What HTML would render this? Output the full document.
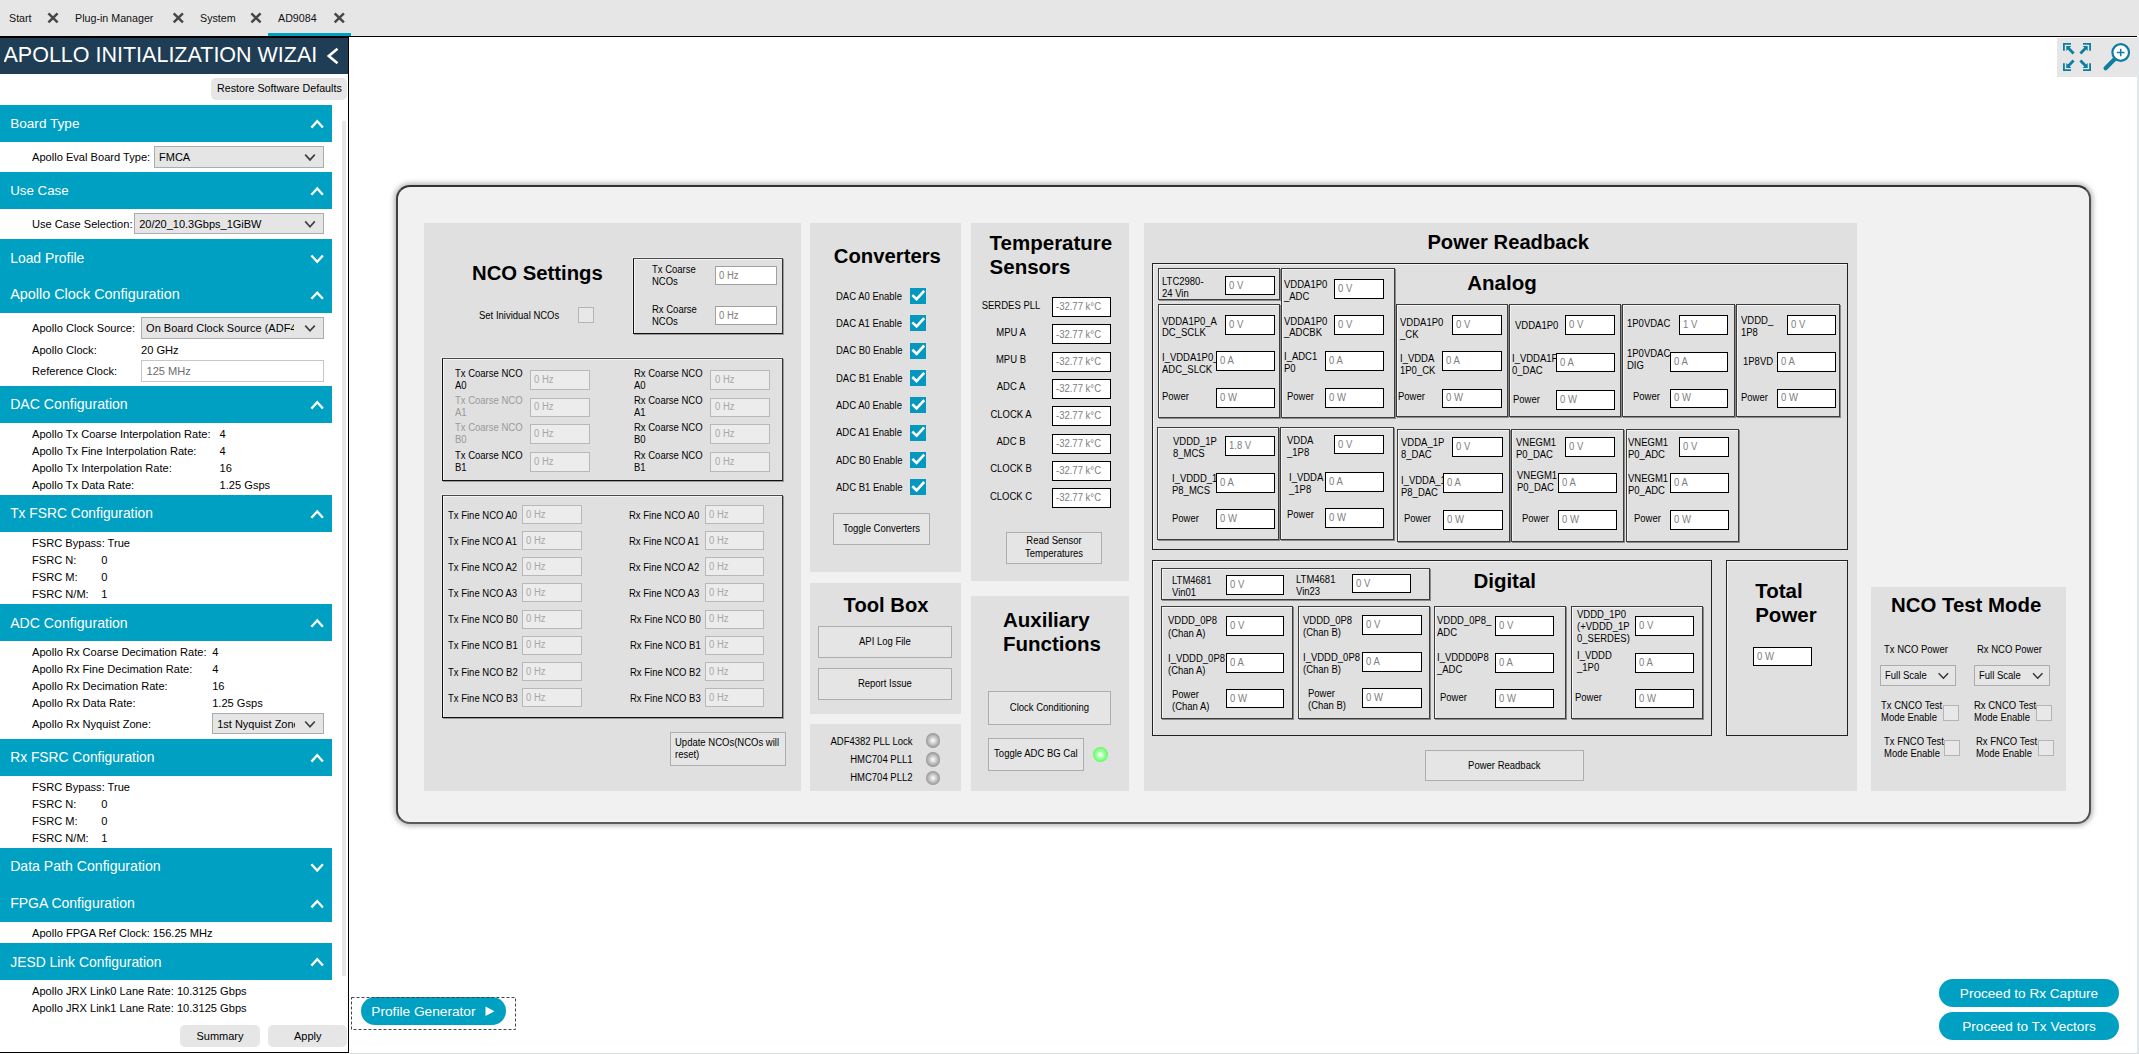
<!DOCTYPE html>
<html><head><meta charset="utf-8"><style>
html,body{margin:0;padding:0;width:2139px;height:1054px;overflow:hidden;background:#fff;position:relative}
body>div{position:absolute}
.t{font-family:"Liberation Sans", sans-serif;white-space:pre;color:#000}
svg{position:absolute;left:0;top:0}
</style></head><body>
<div style="left:0.0px;top:0.0px;width:2139.0px;height:36.0px;background:#e6e6e6"></div>
<div class="t" style="left:9.0px;top:12.15px;font-size:10.7px;line-height:13.91px;color:#111;">Start</div>
<div class="t" style="left:75.0px;top:12.15px;font-size:10.7px;line-height:13.91px;color:#111;">Plug-in Manager</div>
<div class="t" style="left:200.0px;top:12.15px;font-size:10.7px;line-height:13.91px;color:#111;">System</div>
<div class="t" style="left:278.0px;top:12.15px;font-size:10.7px;line-height:13.91px;color:#111;">AD9084</div>
<div style="left:268.0px;top:33.0px;width:83.0px;height:3.0px;background:#00a0c2"></div>
<div style="left:0.0px;top:36.0px;width:2137.0px;height:1.0px;background:#000"></div>
<div style="left:2137.0px;top:37.0px;width:2.0px;height:1017.0px;background:#e2e7e9"></div>
<div style="left:349.0px;top:1053.0px;width:1790.0px;height:1.0px;background:#d6dbde"></div>
<div style="left:2057.0px;top:37.5px;width:80.0px;height:39.5px;background:#e6e6e6"></div>
<div style="left:0.0px;top:37.0px;width:348.0px;height:1015.5px;background:#fff"></div>
<div style="left:0.0px;top:36.0px;width:349.0px;height:1.6px;background:#000"></div>
<div style="left:348.0px;top:37.0px;width:1.0px;height:1016.0px;background:#000"></div>
<div style="left:0.0px;top:1052.0px;width:349.0px;height:1.0px;background:#000"></div>
<div style="left:0.0px;top:37.6px;width:348.0px;height:36.4px;background:#1f3d54"></div>
<div class="t" style="left:3.5px;top:42.75px;font-size:21.5px;line-height:25.80px;color:#fff;width:320px;overflow:hidden">APOLLO INITIALIZATION WIZAI</div>
<div style="left:211.2px;top:78.2px;width:135.8px;height:22.2px;background:#e6e6e6;border-radius:5px"></div>
<div class="t" style="left:217.0px;top:82.34px;font-size:10.7px;line-height:13.91px;color:#000;">Restore Software Defaults</div>
<div style="left:341.6px;top:121.0px;width:4.0px;height:854.7px;background:#e6e6e6"></div>
<div style="left:0.0px;top:105.0px;width:332.0px;height:36.5px;background:#00a0c2"></div>
<div class="t" style="left:10.2px;top:114.71px;font-size:13.6px;line-height:17.68px;color:#fff;">Board Type</div>
<div style="left:0.0px;top:172.0px;width:332.0px;height:37.0px;background:#00a0c2"></div>
<div class="t" style="left:10.2px;top:182.16px;font-size:13.3px;line-height:17.29px;color:#fff;">Use Case</div>
<div style="left:0.0px;top:239.0px;width:332.0px;height:37.0px;background:#00a0c2"></div>
<div class="t" style="left:10.2px;top:248.77px;font-size:13.9px;line-height:18.07px;color:#fff;">Load Profile</div>
<div style="left:0.0px;top:276.0px;width:332.0px;height:37.0px;background:#00a0c2"></div>
<div class="t" style="left:10.2px;top:285.44px;font-size:14.4px;line-height:18.72px;color:#fff;">Apollo Clock Configuration</div>
<div style="left:0.0px;top:386.0px;width:332.0px;height:36.5px;background:#00a0c2"></div>
<div class="t" style="left:10.2px;top:395.38px;font-size:14.1px;line-height:18.33px;color:#fff;">DAC Configuration</div>
<div style="left:0.0px;top:495.0px;width:332.0px;height:36.8px;background:#00a0c2"></div>
<div class="t" style="left:10.2px;top:504.73px;font-size:13.8px;line-height:17.94px;color:#fff;">Tx FSRC Configuration</div>
<div style="left:0.0px;top:604.0px;width:332.0px;height:36.8px;background:#00a0c2"></div>
<div class="t" style="left:10.2px;top:613.53px;font-size:14.1px;line-height:18.33px;color:#fff;">ADC Configuration</div>
<div style="left:0.0px;top:739.0px;width:332.0px;height:36.5px;background:#00a0c2"></div>
<div class="t" style="left:10.2px;top:748.58px;font-size:13.8px;line-height:17.94px;color:#fff;">Rx FSRC Configuration</div>
<div style="left:0.0px;top:848.0px;width:332.0px;height:36.5px;background:#00a0c2"></div>
<div class="t" style="left:10.2px;top:857.38px;font-size:14.1px;line-height:18.33px;color:#fff;">Data Path Configuration</div>
<div style="left:0.0px;top:884.5px;width:332.0px;height:37.0px;background:#00a0c2"></div>
<div class="t" style="left:10.2px;top:894.20px;font-size:14.0px;line-height:18.2px;color:#fff;">FPGA Configuration</div>
<div style="left:0.0px;top:943.0px;width:332.0px;height:36.5px;background:#00a0c2"></div>
<div class="t" style="left:10.2px;top:952.51px;font-size:13.9px;line-height:18.07px;color:#fff;">JESD Link Configuration</div>
<div class="t" style="left:32.0px;top:149.78px;font-size:11.1px;line-height:14.43px;color:#000;">Apollo Eval Board Type:</div>
<div style="left:154.0px;top:146.0px;width:170.0px;height:22.0px;background:#e5e5e5;border:1px solid #acacac;box-sizing:border-box"></div>
<div class="t" style="left:159.0px;top:149.95px;font-size:11.0px;line-height:14.30px;width:145.5px;overflow:hidden;color:#000">FMCA</div>
<div class="t" style="left:32.0px;top:216.78px;font-size:11.1px;line-height:14.43px;color:#000;">Use Case Selection:</div>
<div style="left:134.0px;top:213.0px;width:190.0px;height:21.0px;background:#e5e5e5;border:1px solid #acacac;box-sizing:border-box"></div>
<div class="t" style="left:139.2px;top:216.75px;font-size:11.0px;line-height:14.30px;width:165.3px;overflow:hidden;color:#000">20/20_10.3Gbps_1GiBW</div>
<div class="t" style="left:32.0px;top:320.79px;font-size:11.1px;line-height:14.43px;color:#000;">Apollo Clock Source:</div>
<div style="left:141.0px;top:317.0px;width:183.0px;height:22.0px;background:#e5e5e5;border:1px solid #acacac;box-sizing:border-box"></div>
<div class="t" style="left:146.1px;top:320.85px;font-size:11.0px;line-height:14.30px;width:147.9px;overflow:hidden;color:#000">On Board Clock Source (ADF4382)</div>
<div class="t" style="left:32.0px;top:342.59px;font-size:11.1px;line-height:14.43px;color:#000;">Apollo Clock:</div>
<div class="t" style="left:141.0px;top:342.59px;font-size:11.1px;line-height:14.43px;color:#000;">20 GHz</div>
<div class="t" style="left:32.0px;top:363.59px;font-size:11.1px;line-height:14.43px;color:#000;">Reference Clock:</div>
<div style="left:141.0px;top:360.0px;width:183.0px;height:22.0px;background:#fff;border:1px solid #c6c6c6;box-sizing:border-box"></div>
<div class="t" style="left:146.5px;top:363.79px;font-size:11.1px;line-height:14.43px;color:#6d6d6d;">125 MHz</div>
<div class="t" style="left:32.0px;top:426.99px;font-size:11.1px;line-height:14.43px;color:#000;">Apollo Tx Coarse Interpolation Rate:</div>
<div class="t" style="left:219.6px;top:426.99px;font-size:11.1px;line-height:14.43px;color:#000;">4</div>
<div class="t" style="left:32.0px;top:443.79px;font-size:11.1px;line-height:14.43px;color:#000;">Apollo Tx Fine Interpolation Rate:</div>
<div class="t" style="left:219.6px;top:443.79px;font-size:11.1px;line-height:14.43px;color:#000;">4</div>
<div class="t" style="left:32.0px;top:460.99px;font-size:11.1px;line-height:14.43px;color:#000;">Apollo Tx Interpolation Rate:</div>
<div class="t" style="left:219.6px;top:460.99px;font-size:11.1px;line-height:14.43px;color:#000;">16</div>
<div class="t" style="left:32.0px;top:477.79px;font-size:11.1px;line-height:14.43px;color:#000;">Apollo Tx Data Rate:</div>
<div class="t" style="left:219.6px;top:477.79px;font-size:11.1px;line-height:14.43px;color:#000;">1.25 Gsps</div>
<div class="t" style="left:32.0px;top:535.78px;font-size:11.1px;line-height:14.43px;color:#000;">FSRC Bypass: True</div>
<div class="t" style="left:32.0px;top:552.78px;font-size:11.1px;line-height:14.43px;color:#000;">FSRC N:</div>
<div class="t" style="left:101.2px;top:552.78px;font-size:11.1px;line-height:14.43px;color:#000;">0</div>
<div class="t" style="left:32.0px;top:569.78px;font-size:11.1px;line-height:14.43px;color:#000;">FSRC M:</div>
<div class="t" style="left:101.2px;top:569.78px;font-size:11.1px;line-height:14.43px;color:#000;">0</div>
<div class="t" style="left:32.0px;top:586.78px;font-size:11.1px;line-height:14.43px;color:#000;">FSRC N/M:</div>
<div class="t" style="left:101.2px;top:586.78px;font-size:11.1px;line-height:14.43px;color:#000;">1</div>
<div class="t" style="left:32.0px;top:644.78px;font-size:11.1px;line-height:14.43px;color:#000;">Apollo Rx Coarse Decimation Rate:</div>
<div class="t" style="left:212.2px;top:644.78px;font-size:11.1px;line-height:14.43px;color:#000;">4</div>
<div class="t" style="left:32.0px;top:661.78px;font-size:11.1px;line-height:14.43px;color:#000;">Apollo Rx Fine Decimation Rate:</div>
<div class="t" style="left:212.2px;top:661.78px;font-size:11.1px;line-height:14.43px;color:#000;">4</div>
<div class="t" style="left:32.0px;top:678.78px;font-size:11.1px;line-height:14.43px;color:#000;">Apollo Rx Decimation Rate:</div>
<div class="t" style="left:212.2px;top:678.78px;font-size:11.1px;line-height:14.43px;color:#000;">16</div>
<div class="t" style="left:32.0px;top:695.78px;font-size:11.1px;line-height:14.43px;color:#000;">Apollo Rx Data Rate:</div>
<div class="t" style="left:212.2px;top:695.78px;font-size:11.1px;line-height:14.43px;color:#000;">1.25 Gsps</div>
<div class="t" style="left:32.0px;top:716.78px;font-size:11.1px;line-height:14.43px;color:#000;">Apollo Rx Nyquist Zone:</div>
<div style="left:212.0px;top:713.0px;width:112.0px;height:21.0px;background:#e5e5e5;border:1px solid #acacac;box-sizing:border-box"></div>
<div class="t" style="left:217.2px;top:716.75px;font-size:11.0px;line-height:14.30px;width:77.8px;overflow:hidden;color:#000">1st Nyquist Zone</div>
<div class="t" style="left:32.0px;top:779.78px;font-size:11.1px;line-height:14.43px;color:#000;">FSRC Bypass: True</div>
<div class="t" style="left:32.0px;top:796.78px;font-size:11.1px;line-height:14.43px;color:#000;">FSRC N:</div>
<div class="t" style="left:101.2px;top:796.78px;font-size:11.1px;line-height:14.43px;color:#000;">0</div>
<div class="t" style="left:32.0px;top:813.78px;font-size:11.1px;line-height:14.43px;color:#000;">FSRC M:</div>
<div class="t" style="left:101.2px;top:813.78px;font-size:11.1px;line-height:14.43px;color:#000;">0</div>
<div class="t" style="left:32.0px;top:830.78px;font-size:11.1px;line-height:14.43px;color:#000;">FSRC N/M:</div>
<div class="t" style="left:101.2px;top:830.78px;font-size:11.1px;line-height:14.43px;color:#000;">1</div>
<div class="t" style="left:32.0px;top:925.78px;font-size:11.1px;line-height:14.43px;color:#000;">Apollo FPGA Ref Clock: 156.25 MHz</div>
<div class="t" style="left:32.0px;top:983.78px;font-size:11.1px;line-height:14.43px;color:#000;">Apollo JRX Link0 Lane Rate: 10.3125 Gbps</div>
<div class="t" style="left:32.0px;top:1000.78px;font-size:11.1px;line-height:14.43px;color:#000;">Apollo JRX Link1 Lane Rate: 10.3125 Gbps</div>
<div style="left:180.1px;top:1025.0px;width:79.8px;height:22.2px;background:#e6e6e6;border-radius:5px"></div>
<div class="t" style="left:180px;width:80px;text-align:center;top:1028.95px;font-size:11px;line-height:14.3px">Summary</div>
<div style="left:268.3px;top:1025.0px;width:78.9px;height:22.2px;background:#e6e6e6;border-radius:5px"></div>
<div class="t" style="left:268.3px;width:79px;text-align:center;top:1028.95px;font-size:11px;line-height:14.3px">Apply</div>
<div style="left:361.0px;top:997.0px;width:145.0px;height:28.0px;background:#00a0c2;border-radius:14px"></div>
<div class="t" style="left:371.3px;top:1003.10px;font-size:13.7px;line-height:17.81px;color:#fff;">Profile Generator</div>
<div style="left:1939.0px;top:979.0px;width:180.0px;height:28.0px;background:#00a0c2;border-radius:14px"></div>
<div class="t" style="left:1939px;width:180px;text-align:center;top:985.16px;font-size:13.6px;line-height:17.68px;color:#fff">Proceed to Rx Capture</div>
<div style="left:1939.0px;top:1012.0px;width:180.0px;height:28.0px;background:#00a0c2;border-radius:14px"></div>
<div class="t" style="left:1939px;width:180px;text-align:center;top:1018.16px;font-size:13.6px;line-height:17.68px;color:#fff">Proceed to Tx Vectors</div>
<div style="left:396.0px;top:185.0px;width:1694.5px;height:638.5px;background:#f1f1f1;border:2px solid #4a4a4a;border-top-color:#333;border-left-color:#404040;border-bottom-color:#5a5a5a;border-right-color:#505050;border-radius:14px;box-sizing:border-box;box-shadow:0 0 5px 2px rgba(0,0,0,0.28)"></div>
<div style="left:424.0px;top:223.0px;width:377.0px;height:567.5px;background:#e0e0e0"></div>
<div style="left:810.0px;top:223.0px;width:150.5px;height:349.0px;background:#e0e0e0"></div>
<div style="left:971.0px;top:223.0px;width:158.0px;height:358.0px;background:#e0e0e0"></div>
<div style="left:810.0px;top:583.0px;width:150.5px;height:131.0px;background:#e0e0e0"></div>
<div style="left:810.0px;top:724.0px;width:150.5px;height:66.5px;background:#e0e0e0"></div>
<div style="left:971.0px;top:596.0px;width:158.0px;height:194.5px;background:#e0e0e0"></div>
<div style="left:1143.5px;top:223.0px;width:713.5px;height:567.5px;background:#e0e0e0"></div>
<div style="left:1871.0px;top:587.0px;width:195.0px;height:203.5px;background:#e0e0e0"></div>
<div class="t" style="left:472.0px;top:260.99px;font-size:20.3px;line-height:24.36px;color:#000;font-weight:bold">NCO Settings</div>
<div class="t" style="left:478.7px;top:309.62px;font-size:10.0px;transform:scaleX(0.9500);transform-origin:0 50%;line-height:12.35px;color:#000;">Set Inividual NCOs</div>
<div style="left:578.0px;top:307.0px;width:16.0px;height:16.0px;background:#e8e8e8;border:1px solid #b4b4b4;box-sizing:border-box"></div>
<div style="left:633.0px;top:258.0px;width:150.0px;height:76.0px;border:1px solid #111;border-top-color:#4a4a4a;border-right-color:#333;box-shadow:inset 1px 1px 0 #f4f4f4, -1px -1px 0 #ececec, 1px 1px 0 #9a9a9a;box-sizing:border-box"></div>
<div class="t" style="left:652.2px;top:264.02px;font-size:10.0px;transform:scaleX(0.9500);transform-origin:0 50%;line-height:12.35px;color:#000;">Tx Coarse</div>
<div class="t" style="left:652.2px;top:275.72px;font-size:10.0px;transform:scaleX(0.9500);transform-origin:0 50%;line-height:12.35px;color:#000;">NCOs</div>
<div style="left:715.0px;top:266.0px;width:62.0px;height:19.0px;background:#fff;border:1px solid #a0a0a0;box-sizing:border-box"></div>
<div class="t" style="left:719.0px;top:270.12px;font-size:10.0px;transform:scaleX(0.9500);transform-origin:0 50%;line-height:12.35px;color:#7d7d7d;">0 Hz</div>
<div class="t" style="left:651.7px;top:303.62px;font-size:10.0px;transform:scaleX(0.9500);transform-origin:0 50%;line-height:12.35px;color:#000;">Rx Coarse</div>
<div class="t" style="left:651.7px;top:315.62px;font-size:10.0px;transform:scaleX(0.9500);transform-origin:0 50%;line-height:12.35px;color:#000;">NCOs</div>
<div style="left:715.0px;top:306.0px;width:62.0px;height:19.0px;background:#fff;border:1px solid #a0a0a0;box-sizing:border-box"></div>
<div class="t" style="left:719.0px;top:309.72px;font-size:10.0px;transform:scaleX(0.9500);transform-origin:0 50%;line-height:12.35px;color:#7d7d7d;">0 Hz</div>
<div style="left:442.0px;top:358.0px;width:341.0px;height:123.0px;border:1px solid #111;border-top-color:#4a4a4a;border-right-color:#333;box-shadow:inset 1px 1px 0 #f4f4f4, -1px -1px 0 #ececec, 1px 1px 0 #9a9a9a;box-sizing:border-box"></div>
<div class="t" style="left:454.5px;top:367.82px;font-size:10.0px;transform:scaleX(0.9500);transform-origin:0 50%;line-height:12.35px;color:#000;">Tx Coarse NCO</div>
<div class="t" style="left:454.5px;top:379.62px;font-size:10.0px;transform:scaleX(0.9500);transform-origin:0 50%;line-height:12.35px;color:#000;">A0</div>
<div style="left:530.0px;top:370.0px;width:60.0px;height:20.0px;background:#ececec;border:1px solid #b8b8b8;box-sizing:border-box"></div>
<div class="t" style="left:534.0px;top:374.22px;font-size:10.0px;transform:scaleX(0.9500);transform-origin:0 50%;line-height:12.35px;color:#a8a8a8;">0 Hz</div>
<div class="t" style="left:634.0px;top:367.82px;font-size:10.0px;transform:scaleX(0.9500);transform-origin:0 50%;line-height:12.35px;color:#000;">Rx Coarse NCO</div>
<div class="t" style="left:634.0px;top:379.62px;font-size:10.0px;transform:scaleX(0.9500);transform-origin:0 50%;line-height:12.35px;color:#000;">A0</div>
<div style="left:710.0px;top:370.0px;width:60.0px;height:20.0px;background:#ececec;border:1px solid #b8b8b8;box-sizing:border-box"></div>
<div class="t" style="left:714.5px;top:374.22px;font-size:10.0px;transform:scaleX(0.9500);transform-origin:0 50%;line-height:12.35px;color:#a8a8a8;">0 Hz</div>
<div class="t" style="left:454.5px;top:395.02px;font-size:10.0px;transform:scaleX(0.9500);transform-origin:0 50%;line-height:12.35px;color:#9a9a9a;">Tx Coarse NCO</div>
<div class="t" style="left:454.5px;top:406.82px;font-size:10.0px;transform:scaleX(0.9500);transform-origin:0 50%;line-height:12.35px;color:#9a9a9a;">A1</div>
<div style="left:530.0px;top:398.0px;width:60.0px;height:19.0px;background:#ececec;border:1px solid #b8b8b8;box-sizing:border-box"></div>
<div class="t" style="left:534.0px;top:401.43px;font-size:10.0px;transform:scaleX(0.9500);transform-origin:0 50%;line-height:12.35px;color:#a8a8a8;">0 Hz</div>
<div class="t" style="left:634.0px;top:395.02px;font-size:10.0px;transform:scaleX(0.9500);transform-origin:0 50%;line-height:12.35px;color:#000;">Rx Coarse NCO</div>
<div class="t" style="left:634.0px;top:406.82px;font-size:10.0px;transform:scaleX(0.9500);transform-origin:0 50%;line-height:12.35px;color:#000;">A1</div>
<div style="left:710.0px;top:398.0px;width:60.0px;height:19.0px;background:#ececec;border:1px solid #b8b8b8;box-sizing:border-box"></div>
<div class="t" style="left:714.5px;top:401.43px;font-size:10.0px;transform:scaleX(0.9500);transform-origin:0 50%;line-height:12.35px;color:#a8a8a8;">0 Hz</div>
<div class="t" style="left:454.5px;top:421.82px;font-size:10.0px;transform:scaleX(0.9500);transform-origin:0 50%;line-height:12.35px;color:#9a9a9a;">Tx Coarse NCO</div>
<div class="t" style="left:454.5px;top:433.62px;font-size:10.0px;transform:scaleX(0.9500);transform-origin:0 50%;line-height:12.35px;color:#9a9a9a;">B0</div>
<div style="left:530.0px;top:424.0px;width:60.0px;height:20.0px;background:#ececec;border:1px solid #b8b8b8;box-sizing:border-box"></div>
<div class="t" style="left:534.0px;top:428.22px;font-size:10.0px;transform:scaleX(0.9500);transform-origin:0 50%;line-height:12.35px;color:#a8a8a8;">0 Hz</div>
<div class="t" style="left:634.0px;top:421.82px;font-size:10.0px;transform:scaleX(0.9500);transform-origin:0 50%;line-height:12.35px;color:#000;">Rx Coarse NCO</div>
<div class="t" style="left:634.0px;top:433.62px;font-size:10.0px;transform:scaleX(0.9500);transform-origin:0 50%;line-height:12.35px;color:#000;">B0</div>
<div style="left:710.0px;top:424.0px;width:60.0px;height:20.0px;background:#ececec;border:1px solid #b8b8b8;box-sizing:border-box"></div>
<div class="t" style="left:714.5px;top:428.22px;font-size:10.0px;transform:scaleX(0.9500);transform-origin:0 50%;line-height:12.35px;color:#a8a8a8;">0 Hz</div>
<div class="t" style="left:454.5px;top:449.72px;font-size:10.0px;transform:scaleX(0.9500);transform-origin:0 50%;line-height:12.35px;color:#000;">Tx Coarse NCO</div>
<div class="t" style="left:454.5px;top:461.52px;font-size:10.0px;transform:scaleX(0.9500);transform-origin:0 50%;line-height:12.35px;color:#000;">B1</div>
<div style="left:530.0px;top:452.0px;width:60.0px;height:20.0px;background:#ececec;border:1px solid #b8b8b8;box-sizing:border-box"></div>
<div class="t" style="left:534.0px;top:456.12px;font-size:10.0px;transform:scaleX(0.9500);transform-origin:0 50%;line-height:12.35px;color:#a8a8a8;">0 Hz</div>
<div class="t" style="left:634.0px;top:449.72px;font-size:10.0px;transform:scaleX(0.9500);transform-origin:0 50%;line-height:12.35px;color:#000;">Rx Coarse NCO</div>
<div class="t" style="left:634.0px;top:461.52px;font-size:10.0px;transform:scaleX(0.9500);transform-origin:0 50%;line-height:12.35px;color:#000;">B1</div>
<div style="left:710.0px;top:452.0px;width:60.0px;height:20.0px;background:#ececec;border:1px solid #b8b8b8;box-sizing:border-box"></div>
<div class="t" style="left:714.5px;top:456.12px;font-size:10.0px;transform:scaleX(0.9500);transform-origin:0 50%;line-height:12.35px;color:#a8a8a8;">0 Hz</div>
<div style="left:442.0px;top:495.0px;width:341.0px;height:223.0px;border:1px solid #111;border-top-color:#4a4a4a;border-right-color:#333;box-shadow:inset 1px 1px 0 #f4f4f4, -1px -1px 0 #ececec, 1px 1px 0 #9a9a9a;box-sizing:border-box"></div>
<div class="t" style="left:447.9px;top:509.72px;font-size:10.0px;transform:scaleX(0.9500);transform-origin:0 50%;line-height:12.35px;color:#000;">Tx Fine NCO A0</div>
<div style="left:522.0px;top:505.0px;width:60.0px;height:19.0px;background:#ececec;border:1px solid #b8b8b8;box-sizing:border-box"></div>
<div class="t" style="left:526.3px;top:508.72px;font-size:10.0px;transform:scaleX(0.9500);transform-origin:0 50%;line-height:12.35px;color:#a8a8a8;">0 Hz</div>
<div class="t" style="left:629.0px;top:509.72px;font-size:10.0px;transform:scaleX(0.9500);transform-origin:0 50%;line-height:12.35px;color:#000;">Rx Fine NCO A0</div>
<div style="left:705.0px;top:505.0px;width:59.0px;height:19.0px;background:#ececec;border:1px solid #b8b8b8;box-sizing:border-box"></div>
<div class="t" style="left:709.3px;top:508.72px;font-size:10.0px;transform:scaleX(0.9500);transform-origin:0 50%;line-height:12.35px;color:#a8a8a8;">0 Hz</div>
<div class="t" style="left:447.9px;top:535.88px;font-size:10.0px;transform:scaleX(0.9500);transform-origin:0 50%;line-height:12.35px;color:#000;">Tx Fine NCO A1</div>
<div style="left:522.0px;top:531.0px;width:60.0px;height:19.0px;background:#ececec;border:1px solid #b8b8b8;box-sizing:border-box"></div>
<div class="t" style="left:526.3px;top:534.88px;font-size:10.0px;transform:scaleX(0.9500);transform-origin:0 50%;line-height:12.35px;color:#a8a8a8;">0 Hz</div>
<div class="t" style="left:629.0px;top:535.88px;font-size:10.0px;transform:scaleX(0.9500);transform-origin:0 50%;line-height:12.35px;color:#000;">Rx Fine NCO A1</div>
<div style="left:705.0px;top:531.0px;width:59.0px;height:19.0px;background:#ececec;border:1px solid #b8b8b8;box-sizing:border-box"></div>
<div class="t" style="left:709.3px;top:534.88px;font-size:10.0px;transform:scaleX(0.9500);transform-origin:0 50%;line-height:12.35px;color:#a8a8a8;">0 Hz</div>
<div class="t" style="left:447.9px;top:562.02px;font-size:10.0px;transform:scaleX(0.9500);transform-origin:0 50%;line-height:12.35px;color:#000;">Tx Fine NCO A2</div>
<div style="left:522.0px;top:557.0px;width:60.0px;height:19.0px;background:#ececec;border:1px solid #b8b8b8;box-sizing:border-box"></div>
<div class="t" style="left:526.3px;top:561.02px;font-size:10.0px;transform:scaleX(0.9500);transform-origin:0 50%;line-height:12.35px;color:#a8a8a8;">0 Hz</div>
<div class="t" style="left:629.0px;top:562.02px;font-size:10.0px;transform:scaleX(0.9500);transform-origin:0 50%;line-height:12.35px;color:#000;">Rx Fine NCO A2</div>
<div style="left:705.0px;top:557.0px;width:59.0px;height:19.0px;background:#ececec;border:1px solid #b8b8b8;box-sizing:border-box"></div>
<div class="t" style="left:709.3px;top:561.02px;font-size:10.0px;transform:scaleX(0.9500);transform-origin:0 50%;line-height:12.35px;color:#a8a8a8;">0 Hz</div>
<div class="t" style="left:447.9px;top:588.18px;font-size:10.0px;transform:scaleX(0.9500);transform-origin:0 50%;line-height:12.35px;color:#000;">Tx Fine NCO A3</div>
<div style="left:522.0px;top:583.0px;width:60.0px;height:19.0px;background:#ececec;border:1px solid #b8b8b8;box-sizing:border-box"></div>
<div class="t" style="left:526.3px;top:587.18px;font-size:10.0px;transform:scaleX(0.9500);transform-origin:0 50%;line-height:12.35px;color:#a8a8a8;">0 Hz</div>
<div class="t" style="left:629.0px;top:588.18px;font-size:10.0px;transform:scaleX(0.9500);transform-origin:0 50%;line-height:12.35px;color:#000;">Rx Fine NCO A3</div>
<div style="left:705.0px;top:583.0px;width:59.0px;height:19.0px;background:#ececec;border:1px solid #b8b8b8;box-sizing:border-box"></div>
<div class="t" style="left:709.3px;top:587.18px;font-size:10.0px;transform:scaleX(0.9500);transform-origin:0 50%;line-height:12.35px;color:#a8a8a8;">0 Hz</div>
<div class="t" style="left:447.9px;top:614.33px;font-size:10.0px;transform:scaleX(0.9500);transform-origin:0 50%;line-height:12.35px;color:#000;">Tx Fine NCO B0</div>
<div style="left:522.0px;top:610.0px;width:60.0px;height:19.0px;background:#ececec;border:1px solid #b8b8b8;box-sizing:border-box"></div>
<div class="t" style="left:526.3px;top:613.33px;font-size:10.0px;transform:scaleX(0.9500);transform-origin:0 50%;line-height:12.35px;color:#a8a8a8;">0 Hz</div>
<div class="t" style="left:629.7px;top:614.33px;font-size:10.0px;transform:scaleX(0.9500);transform-origin:0 50%;line-height:12.35px;color:#000;">Rx Fine NCO B0</div>
<div style="left:705.0px;top:610.0px;width:59.0px;height:19.0px;background:#ececec;border:1px solid #b8b8b8;box-sizing:border-box"></div>
<div class="t" style="left:709.3px;top:613.33px;font-size:10.0px;transform:scaleX(0.9500);transform-origin:0 50%;line-height:12.35px;color:#a8a8a8;">0 Hz</div>
<div class="t" style="left:447.9px;top:640.48px;font-size:10.0px;transform:scaleX(0.9500);transform-origin:0 50%;line-height:12.35px;color:#000;">Tx Fine NCO B1</div>
<div style="left:522.0px;top:636.0px;width:60.0px;height:19.0px;background:#ececec;border:1px solid #b8b8b8;box-sizing:border-box"></div>
<div class="t" style="left:526.3px;top:639.48px;font-size:10.0px;transform:scaleX(0.9500);transform-origin:0 50%;line-height:12.35px;color:#a8a8a8;">0 Hz</div>
<div class="t" style="left:629.7px;top:640.48px;font-size:10.0px;transform:scaleX(0.9500);transform-origin:0 50%;line-height:12.35px;color:#000;">Rx Fine NCO B1</div>
<div style="left:705.0px;top:636.0px;width:59.0px;height:19.0px;background:#ececec;border:1px solid #b8b8b8;box-sizing:border-box"></div>
<div class="t" style="left:709.3px;top:639.48px;font-size:10.0px;transform:scaleX(0.9500);transform-origin:0 50%;line-height:12.35px;color:#a8a8a8;">0 Hz</div>
<div class="t" style="left:447.9px;top:666.62px;font-size:10.0px;transform:scaleX(0.9500);transform-origin:0 50%;line-height:12.35px;color:#000;">Tx Fine NCO B2</div>
<div style="left:522.0px;top:662.0px;width:60.0px;height:19.0px;background:#ececec;border:1px solid #b8b8b8;box-sizing:border-box"></div>
<div class="t" style="left:526.3px;top:665.62px;font-size:10.0px;transform:scaleX(0.9500);transform-origin:0 50%;line-height:12.35px;color:#a8a8a8;">0 Hz</div>
<div class="t" style="left:629.7px;top:666.62px;font-size:10.0px;transform:scaleX(0.9500);transform-origin:0 50%;line-height:12.35px;color:#000;">Rx Fine NCO B2</div>
<div style="left:705.0px;top:662.0px;width:59.0px;height:19.0px;background:#ececec;border:1px solid #b8b8b8;box-sizing:border-box"></div>
<div class="t" style="left:709.3px;top:665.62px;font-size:10.0px;transform:scaleX(0.9500);transform-origin:0 50%;line-height:12.35px;color:#a8a8a8;">0 Hz</div>
<div class="t" style="left:447.9px;top:692.77px;font-size:10.0px;transform:scaleX(0.9500);transform-origin:0 50%;line-height:12.35px;color:#000;">Tx Fine NCO B3</div>
<div style="left:522.0px;top:688.0px;width:60.0px;height:19.0px;background:#ececec;border:1px solid #b8b8b8;box-sizing:border-box"></div>
<div class="t" style="left:526.3px;top:691.77px;font-size:10.0px;transform:scaleX(0.9500);transform-origin:0 50%;line-height:12.35px;color:#a8a8a8;">0 Hz</div>
<div class="t" style="left:629.7px;top:692.77px;font-size:10.0px;transform:scaleX(0.9500);transform-origin:0 50%;line-height:12.35px;color:#000;">Rx Fine NCO B3</div>
<div style="left:705.0px;top:688.0px;width:59.0px;height:19.0px;background:#ececec;border:1px solid #b8b8b8;box-sizing:border-box"></div>
<div class="t" style="left:709.3px;top:691.77px;font-size:10.0px;transform:scaleX(0.9500);transform-origin:0 50%;line-height:12.35px;color:#a8a8a8;">0 Hz</div>
<div style="left:670.0px;top:732.0px;width:116.0px;height:34.0px;background:#e5e5e5;border:1px solid #adadad;box-sizing:border-box"></div>
<div class="t" style="left:675.2px;top:736.73px;font-size:10.0px;transform:scaleX(0.9500);transform-origin:0 50%;line-height:12.35px;color:#000;">Update NCOs(NCOs will</div>
<div class="t" style="left:675.2px;top:748.93px;font-size:10.0px;transform:scaleX(0.9500);transform-origin:0 50%;line-height:12.35px;color:#000;">reset)</div>
<div class="t" style="left:833.8px;top:243.79px;font-size:20.3px;line-height:24.36px;color:#000;font-weight:bold">Converters</div>
<div class="t" style="left:835.6px;top:290.72px;font-size:10.0px;transform:scaleX(0.9500);transform-origin:0 50%;line-height:12.35px;color:#000;">DAC A0 Enable</div>
<div style="left:910.0px;top:288.0px;width:16.0px;height:16.0px;background:#0598be"></div>
<div class="t" style="left:835.6px;top:318.02px;font-size:10.0px;transform:scaleX(0.9500);transform-origin:0 50%;line-height:12.35px;color:#000;">DAC A1 Enable</div>
<div style="left:910.0px;top:315.3px;width:16.0px;height:16.0px;background:#0598be"></div>
<div class="t" style="left:835.6px;top:345.32px;font-size:10.0px;transform:scaleX(0.9500);transform-origin:0 50%;line-height:12.35px;color:#000;">DAC B0 Enable</div>
<div style="left:910.0px;top:342.6px;width:16.0px;height:16.0px;background:#0598be"></div>
<div class="t" style="left:835.6px;top:372.62px;font-size:10.0px;transform:scaleX(0.9500);transform-origin:0 50%;line-height:12.35px;color:#000;">DAC B1 Enable</div>
<div style="left:910.0px;top:369.9px;width:16.0px;height:16.0px;background:#0598be"></div>
<div class="t" style="left:835.6px;top:399.92px;font-size:10.0px;transform:scaleX(0.9500);transform-origin:0 50%;line-height:12.35px;color:#000;">ADC A0 Enable</div>
<div style="left:910.0px;top:397.2px;width:16.0px;height:16.0px;background:#0598be"></div>
<div class="t" style="left:835.6px;top:427.22px;font-size:10.0px;transform:scaleX(0.9500);transform-origin:0 50%;line-height:12.35px;color:#000;">ADC A1 Enable</div>
<div style="left:910.0px;top:424.5px;width:16.0px;height:16.0px;background:#0598be"></div>
<div class="t" style="left:835.6px;top:454.52px;font-size:10.0px;transform:scaleX(0.9500);transform-origin:0 50%;line-height:12.35px;color:#000;">ADC B0 Enable</div>
<div style="left:910.0px;top:451.8px;width:16.0px;height:16.0px;background:#0598be"></div>
<div class="t" style="left:835.6px;top:481.82px;font-size:10.0px;transform:scaleX(0.9500);transform-origin:0 50%;line-height:12.35px;color:#000;">ADC B1 Enable</div>
<div style="left:910.0px;top:479.1px;width:16.0px;height:16.0px;background:#0598be"></div>
<div style="left:833.0px;top:513.0px;width:97.0px;height:32.0px;background:#e5e5e5;border:1px solid #adadad;box-sizing:border-box"></div>
<div class="t" style="left:833.0px;width:97.0px;text-align:center;top:522.62px;font-size:10.0px;transform:scaleX(0.9500);transform-origin:50% 50%;line-height:12.35px;color:#000">Toggle Converters</div>
<div class="t" style="left:989.6px;top:231.20px;font-size:20.5px;line-height:24.60px;color:#000;font-weight:bold">Temperature</div>
<div class="t" style="left:989.6px;top:255.40px;font-size:20.5px;line-height:24.60px;color:#000;font-weight:bold">Sensors</div>
<div class="t" style="left:961px;width:100px;text-align:center;top:299.52px;font-size:10.0px;transform:scaleX(0.9500);transform-origin:50% 50%;line-height:12.35px">SERDES PLL</div>
<div style="left:1052.0px;top:297.0px;width:59.0px;height:20.0px;background:#fff;border:1px solid #000;box-sizing:border-box"></div>
<div class="t" style="left:1056.0px;top:301.22px;font-size:10.0px;transform:scaleX(0.9500);transform-origin:0 50%;line-height:12.35px;color:#7d7d7d;">-32.77 k°C</div>
<div class="t" style="left:961px;width:100px;text-align:center;top:326.82px;font-size:10.0px;transform:scaleX(0.9500);transform-origin:50% 50%;line-height:12.35px">MPU A</div>
<div style="left:1052.0px;top:324.0px;width:59.0px;height:20.0px;background:#fff;border:1px solid #000;box-sizing:border-box"></div>
<div class="t" style="left:1056.0px;top:328.52px;font-size:10.0px;transform:scaleX(0.9500);transform-origin:0 50%;line-height:12.35px;color:#7d7d7d;">-32.77 k°C</div>
<div class="t" style="left:961px;width:100px;text-align:center;top:354.12px;font-size:10.0px;transform:scaleX(0.9500);transform-origin:50% 50%;line-height:12.35px">MPU B</div>
<div style="left:1052.0px;top:352.0px;width:59.0px;height:20.0px;background:#fff;border:1px solid #000;box-sizing:border-box"></div>
<div class="t" style="left:1056.0px;top:355.82px;font-size:10.0px;transform:scaleX(0.9500);transform-origin:0 50%;line-height:12.35px;color:#7d7d7d;">-32.77 k°C</div>
<div class="t" style="left:961px;width:100px;text-align:center;top:381.43px;font-size:10.0px;transform:scaleX(0.9500);transform-origin:50% 50%;line-height:12.35px">ADC A</div>
<div style="left:1052.0px;top:379.0px;width:59.0px;height:20.0px;background:#fff;border:1px solid #000;box-sizing:border-box"></div>
<div class="t" style="left:1056.0px;top:383.12px;font-size:10.0px;transform:scaleX(0.9500);transform-origin:0 50%;line-height:12.35px;color:#7d7d7d;">-32.77 k°C</div>
<div class="t" style="left:961px;width:100px;text-align:center;top:408.72px;font-size:10.0px;transform:scaleX(0.9500);transform-origin:50% 50%;line-height:12.35px">CLOCK A</div>
<div style="left:1052.0px;top:406.0px;width:59.0px;height:20.0px;background:#fff;border:1px solid #000;box-sizing:border-box"></div>
<div class="t" style="left:1056.0px;top:410.42px;font-size:10.0px;transform:scaleX(0.9500);transform-origin:0 50%;line-height:12.35px;color:#7d7d7d;">-32.77 k°C</div>
<div class="t" style="left:961px;width:100px;text-align:center;top:436.02px;font-size:10.0px;transform:scaleX(0.9500);transform-origin:50% 50%;line-height:12.35px">ADC B</div>
<div style="left:1052.0px;top:434.0px;width:59.0px;height:20.0px;background:#fff;border:1px solid #000;box-sizing:border-box"></div>
<div class="t" style="left:1056.0px;top:437.72px;font-size:10.0px;transform:scaleX(0.9500);transform-origin:0 50%;line-height:12.35px;color:#7d7d7d;">-32.77 k°C</div>
<div class="t" style="left:961px;width:100px;text-align:center;top:463.32px;font-size:10.0px;transform:scaleX(0.9500);transform-origin:50% 50%;line-height:12.35px">CLOCK B</div>
<div style="left:1052.0px;top:461.0px;width:59.0px;height:20.0px;background:#fff;border:1px solid #000;box-sizing:border-box"></div>
<div class="t" style="left:1056.0px;top:465.02px;font-size:10.0px;transform:scaleX(0.9500);transform-origin:0 50%;line-height:12.35px;color:#7d7d7d;">-32.77 k°C</div>
<div class="t" style="left:961px;width:100px;text-align:center;top:490.62px;font-size:10.0px;transform:scaleX(0.9500);transform-origin:50% 50%;line-height:12.35px">CLOCK C</div>
<div style="left:1052.0px;top:488.0px;width:59.0px;height:20.0px;background:#fff;border:1px solid #000;box-sizing:border-box"></div>
<div class="t" style="left:1056.0px;top:492.32px;font-size:10.0px;transform:scaleX(0.9500);transform-origin:0 50%;line-height:12.35px;color:#7d7d7d;">-32.77 k°C</div>
<div style="left:1006.0px;top:532.0px;width:96.0px;height:32.0px;background:#e5e5e5;border:1px solid #adadad;box-sizing:border-box"></div>
<div class="t" style="left:1005.6px;width:96.1px;text-align:center;top:535.43px;font-size:10.0px;transform:scaleX(0.9500);transform-origin:50% 50%;line-height:12.35px;color:#000">Read Sensor</div>
<div class="t" style="left:1005.6px;width:96.1px;text-align:center;top:547.53px;font-size:10.0px;transform:scaleX(0.9500);transform-origin:50% 50%;line-height:12.35px;color:#000">Temperatures</div>
<div class="t" style="left:843.6px;top:592.88px;font-size:20.2px;line-height:24.24px;color:#000;font-weight:bold">Tool Box</div>
<div style="left:818.0px;top:626.0px;width:134.0px;height:32.0px;background:#e5e5e5;border:1px solid #adadad;box-sizing:border-box"></div>
<div class="t" style="left:818.0px;width:133.7px;text-align:center;top:635.83px;font-size:10.0px;transform:scaleX(0.9500);transform-origin:50% 50%;line-height:12.35px;color:#000">API Log File</div>
<div style="left:818.0px;top:668.0px;width:134.0px;height:32.0px;background:#e5e5e5;border:1px solid #adadad;box-sizing:border-box"></div>
<div class="t" style="left:818.0px;width:133.7px;text-align:center;top:677.83px;font-size:10.0px;transform:scaleX(0.9500);transform-origin:50% 50%;line-height:12.35px;color:#000">Report Issue</div>
<div class="t" style="left:812px;width:100.5px;text-align:right;top:735.62px;font-size:10.0px;transform:scaleX(0.9500);transform-origin:100% 50%;line-height:12.35px">ADF4382 PLL Lock</div>
<div class="t" style="left:812px;width:100.5px;text-align:right;top:754.33px;font-size:10.0px;transform:scaleX(0.9500);transform-origin:100% 50%;line-height:12.35px">HMC704 PLL1</div>
<div class="t" style="left:812px;width:100.5px;text-align:right;top:772.23px;font-size:10.0px;transform:scaleX(0.9500);transform-origin:100% 50%;line-height:12.35px">HMC704 PLL2</div>
<div style="left:925.7px;top:733.2px;width:14.5px;height:14.5px;border-radius:50%;background:radial-gradient(circle at 50% 50%, #ffffff 0%, #d2d2d2 30%, #a2a2a2 62%, #80868c 85%, #767c82 100%)"></div>
<div style="left:925.7px;top:752.4px;width:14.5px;height:14.5px;border-radius:50%;background:radial-gradient(circle at 50% 50%, #ffffff 0%, #d2d2d2 30%, #a2a2a2 62%, #80868c 85%, #767c82 100%)"></div>
<div style="left:925.7px;top:770.8px;width:14.5px;height:14.5px;border-radius:50%;background:radial-gradient(circle at 50% 50%, #ffffff 0%, #d2d2d2 30%, #a2a2a2 62%, #80868c 85%, #767c82 100%)"></div>
<div class="t" style="left:1003.0px;top:607.80px;font-size:20.5px;line-height:24.60px;color:#000;font-weight:bold">Auxiliary</div>
<div class="t" style="left:1003.0px;top:632.40px;font-size:20.5px;line-height:24.60px;color:#000;font-weight:bold">Functions</div>
<div style="left:988.0px;top:691.0px;width:123.0px;height:34.0px;background:#e5e5e5;border:1px solid #adadad;box-sizing:border-box"></div>
<div class="t" style="left:988.0px;width:122.8px;text-align:center;top:701.83px;font-size:10.0px;transform:scaleX(0.9500);transform-origin:50% 50%;line-height:12.35px;color:#000">Clock Conditioning</div>
<div style="left:988.0px;top:738.0px;width:96.0px;height:33.0px;background:#e5e5e5;border:1px solid #adadad;box-sizing:border-box"></div>
<div class="t" style="left:988.0px;width:95.7px;text-align:center;top:748.43px;font-size:10.0px;transform:scaleX(0.9500);transform-origin:50% 50%;line-height:12.35px;color:#000">Toggle ADC BG Cal</div>
<div style="left:1093.0px;top:746.9px;width:15.0px;height:15.0px;border-radius:50%;background:radial-gradient(circle at 50% 50%, #f4fff4 0%, #b5ffb5 30%, #6cff6c 62%, #22ff22 88%, #10f010 100%)"></div>
<div class="t" style="left:1427.4px;top:229.88px;font-size:20.2px;line-height:24.24px;color:#000;font-weight:bold">Power Readback</div>
<div style="left:1152.0px;top:263.0px;width:696.0px;height:287.0px;border:1px solid #222;box-shadow:inset 1px 1px 0 #f4f4f4;box-sizing:border-box"></div>
<div class="t" style="left:1467.3px;top:271.40px;font-size:20.5px;line-height:24.60px;color:#000;font-weight:bold">Analog</div>
<div style="left:1158.0px;top:268.0px;width:122.0px;height:32.0px;border:1px solid #3c3c3c;box-shadow:inset 1px 1px 0 #f4f4f4, 1px 1px 0 #8a8a8a;box-sizing:border-box"></div>
<div class="t" style="left:1162.4px;top:275.92px;font-size:10.0px;transform:scaleX(0.9500);transform-origin:0 50%;line-height:12.35px;color:#000;">LTC2980-</div>
<div class="t" style="left:1162.4px;top:288.02px;font-size:10.0px;transform:scaleX(0.9500);transform-origin:0 50%;line-height:12.35px;color:#000;">24 Vin</div>
<div style="left:1225.0px;top:276.0px;width:50.0px;height:19.0px;background:#fff;border:1px solid #000;box-sizing:border-box"></div>
<div class="t" style="left:1229.0px;top:280.02px;font-size:10.0px;transform:scaleX(0.9500);transform-origin:0 50%;line-height:12.35px;color:#7d7d7d;">0 V</div>
<div style="left:1158.0px;top:304.0px;width:122.0px;height:114.0px;border:1px solid #3c3c3c;box-shadow:inset 1px 1px 0 #f4f4f4, 1px 1px 0 #8a8a8a;box-sizing:border-box"></div>
<div class="t" style="left:1162.4px;top:315.82px;font-size:10.0px;transform:scaleX(0.9500);transform-origin:0 50%;line-height:12.35px;color:#000;">VDDA1P0_A</div>
<div class="t" style="left:1162.4px;top:327.42px;font-size:10.0px;transform:scaleX(0.9500);transform-origin:0 50%;line-height:12.35px;color:#000;">DC_SCLK</div>
<div style="left:1225.0px;top:315.0px;width:50.0px;height:20.0px;background:#fff;border:1px solid #000;box-sizing:border-box"></div>
<div class="t" style="left:1229.0px;top:319.12px;font-size:10.0px;transform:scaleX(0.9500);transform-origin:0 50%;line-height:12.35px;color:#7d7d7d;">0 V</div>
<div class="t" style="left:1162.4px;top:352.22px;font-size:10.0px;transform:scaleX(0.9500);transform-origin:0 50%;line-height:12.35px;color:#000;">I_VDDA1P0_</div>
<div class="t" style="left:1162.4px;top:363.82px;font-size:10.0px;transform:scaleX(0.9500);transform-origin:0 50%;line-height:12.35px;color:#000;">ADC_SLCK</div>
<div style="left:1216.0px;top:351.0px;width:59.0px;height:20.0px;background:#fff;border:1px solid #000;box-sizing:border-box"></div>
<div class="t" style="left:1220.2px;top:355.02px;font-size:10.0px;transform:scaleX(0.9500);transform-origin:0 50%;line-height:12.35px;color:#7d7d7d;">0 A</div>
<div class="t" style="left:1162.4px;top:391.02px;font-size:10.0px;transform:scaleX(0.9500);transform-origin:0 50%;line-height:12.35px;color:#000;">Power</div>
<div style="left:1216.0px;top:388.0px;width:59.0px;height:20.0px;background:#fff;border:1px solid #000;box-sizing:border-box"></div>
<div class="t" style="left:1220.2px;top:391.97px;font-size:10.0px;transform:scaleX(0.9500);transform-origin:0 50%;line-height:12.35px;color:#7d7d7d;">0 W</div>
<div style="left:1281.0px;top:268.0px;width:114.0px;height:150.0px;border:1px solid #3c3c3c;box-shadow:inset 1px 1px 0 #f4f4f4, 1px 1px 0 #8a8a8a;box-sizing:border-box"></div>
<div class="t" style="left:1284.3px;top:278.82px;font-size:10.0px;transform:scaleX(0.9500);transform-origin:0 50%;line-height:12.35px;color:#000;">VDDA1P0</div>
<div class="t" style="left:1284.3px;top:290.92px;font-size:10.0px;transform:scaleX(0.9500);transform-origin:0 50%;line-height:12.35px;color:#000;">_ADC</div>
<div style="left:1334.0px;top:279.0px;width:50.0px;height:20.0px;background:#fff;border:1px solid #000;box-sizing:border-box"></div>
<div class="t" style="left:1338.0px;top:283.12px;font-size:10.0px;transform:scaleX(0.9500);transform-origin:0 50%;line-height:12.35px;color:#7d7d7d;">0 V</div>
<div class="t" style="left:1284.3px;top:315.82px;font-size:10.0px;transform:scaleX(0.9500);transform-origin:0 50%;line-height:12.35px;color:#000;">VDDA1P0</div>
<div class="t" style="left:1284.3px;top:327.42px;font-size:10.0px;transform:scaleX(0.9500);transform-origin:0 50%;line-height:12.35px;color:#000;">_ADCBK</div>
<div style="left:1334.0px;top:315.0px;width:50.0px;height:20.0px;background:#fff;border:1px solid #000;box-sizing:border-box"></div>
<div class="t" style="left:1338.0px;top:319.12px;font-size:10.0px;transform:scaleX(0.9500);transform-origin:0 50%;line-height:12.35px;color:#7d7d7d;">0 V</div>
<div class="t" style="left:1284.3px;top:351.22px;font-size:10.0px;transform:scaleX(0.9500);transform-origin:0 50%;line-height:12.35px;color:#000;">I_ADC1</div>
<div class="t" style="left:1284.3px;top:362.82px;font-size:10.0px;transform:scaleX(0.9500);transform-origin:0 50%;line-height:12.35px;color:#000;">P0</div>
<div style="left:1325.0px;top:351.0px;width:59.0px;height:20.0px;background:#fff;border:1px solid #000;box-sizing:border-box"></div>
<div class="t" style="left:1329.3px;top:355.02px;font-size:10.0px;transform:scaleX(0.9500);transform-origin:0 50%;line-height:12.35px;color:#7d7d7d;">0 A</div>
<div class="t" style="left:1287.4px;top:391.02px;font-size:10.0px;transform:scaleX(0.9500);transform-origin:0 50%;line-height:12.35px;color:#000;">Power</div>
<div style="left:1325.0px;top:388.0px;width:59.0px;height:20.0px;background:#fff;border:1px solid #000;box-sizing:border-box"></div>
<div class="t" style="left:1329.3px;top:391.97px;font-size:10.0px;transform:scaleX(0.9500);transform-origin:0 50%;line-height:12.35px;color:#7d7d7d;">0 W</div>
<div style="left:1396.0px;top:304.0px;width:112.0px;height:113.0px;border:1px solid #3c3c3c;box-shadow:inset 1px 1px 0 #f4f4f4, 1px 1px 0 #8a8a8a;box-sizing:border-box"></div>
<div class="t" style="left:1399.9px;top:316.92px;font-size:10.0px;transform:scaleX(0.9500);transform-origin:0 50%;line-height:12.35px;color:#000;">VDDA1P0</div>
<div class="t" style="left:1399.9px;top:329.02px;font-size:10.0px;transform:scaleX(0.9500);transform-origin:0 50%;line-height:12.35px;color:#000;">_CK</div>
<div style="left:1452.0px;top:315.0px;width:50.0px;height:20.0px;background:#fff;border:1px solid #000;box-sizing:border-box"></div>
<div class="t" style="left:1456.2px;top:319.32px;font-size:10.0px;transform:scaleX(0.9500);transform-origin:0 50%;line-height:12.35px;color:#7d7d7d;">0 V</div>
<div class="t" style="left:1399.9px;top:353.22px;font-size:10.0px;transform:scaleX(0.9500);transform-origin:0 50%;line-height:12.35px;color:#000;">I_VDDA</div>
<div class="t" style="left:1399.9px;top:364.82px;font-size:10.0px;transform:scaleX(0.9500);transform-origin:0 50%;line-height:12.35px;color:#000;">1P0_CK</div>
<div style="left:1442.0px;top:351.0px;width:60.0px;height:20.0px;background:#fff;border:1px solid #000;box-sizing:border-box"></div>
<div class="t" style="left:1446.0px;top:355.12px;font-size:10.0px;transform:scaleX(0.9500);transform-origin:0 50%;line-height:12.35px;color:#7d7d7d;">0 A</div>
<div class="t" style="left:1398.3px;top:391.22px;font-size:10.0px;transform:scaleX(0.9500);transform-origin:0 50%;line-height:12.35px;color:#000;">Power</div>
<div style="left:1442.0px;top:389.0px;width:60.0px;height:19.0px;background:#fff;border:1px solid #000;box-sizing:border-box"></div>
<div class="t" style="left:1446.0px;top:392.37px;font-size:10.0px;transform:scaleX(0.9500);transform-origin:0 50%;line-height:12.35px;color:#7d7d7d;">0 W</div>
<div style="left:1509.0px;top:304.0px;width:112.0px;height:113.0px;border:1px solid #3c3c3c;box-shadow:inset 1px 1px 0 #f4f4f4, 1px 1px 0 #8a8a8a;box-sizing:border-box"></div>
<div class="t" style="left:1514.6px;top:319.52px;font-size:10.0px;transform:scaleX(0.9500);transform-origin:0 50%;line-height:12.35px;color:#000;">VDDA1P0</div>
<div style="left:1565.0px;top:315.0px;width:50.0px;height:20.0px;background:#fff;border:1px solid #000;box-sizing:border-box"></div>
<div class="t" style="left:1569.0px;top:319.32px;font-size:10.0px;transform:scaleX(0.9500);transform-origin:0 50%;line-height:12.35px;color:#7d7d7d;">0 V</div>
<div class="t" style="left:1512.0px;top:353.22px;font-size:10.0px;transform:scaleX(0.9500);transform-origin:0 50%;line-height:12.35px;color:#000;">I_VDDA1P</div>
<div class="t" style="left:1512.0px;top:364.82px;font-size:10.0px;transform:scaleX(0.9500);transform-origin:0 50%;line-height:12.35px;color:#000;">0_DAC</div>
<div style="left:1556.0px;top:353.0px;width:59.0px;height:19.0px;background:#fff;border:1px solid #000;box-sizing:border-box"></div>
<div class="t" style="left:1560.3px;top:357.17px;font-size:10.0px;transform:scaleX(0.9500);transform-origin:0 50%;line-height:12.35px;color:#7d7d7d;">0 A</div>
<div class="t" style="left:1512.6px;top:393.82px;font-size:10.0px;transform:scaleX(0.9500);transform-origin:0 50%;line-height:12.35px;color:#000;">Power</div>
<div style="left:1556.0px;top:390.0px;width:59.0px;height:20.0px;background:#fff;border:1px solid #000;box-sizing:border-box"></div>
<div class="t" style="left:1560.3px;top:394.12px;font-size:10.0px;transform:scaleX(0.9500);transform-origin:0 50%;line-height:12.35px;color:#7d7d7d;">0 W</div>
<div style="left:1622.0px;top:304.0px;width:113.0px;height:113.0px;border:1px solid #3c3c3c;box-shadow:inset 1px 1px 0 #f4f4f4, 1px 1px 0 #8a8a8a;box-sizing:border-box"></div>
<div class="t" style="left:1626.9px;top:317.52px;font-size:10.0px;transform:scaleX(0.9500);transform-origin:0 50%;line-height:12.35px;color:#000;">1P0VDAC</div>
<div style="left:1679.0px;top:315.0px;width:49.0px;height:20.0px;background:#fff;border:1px solid #000;box-sizing:border-box"></div>
<div class="t" style="left:1683.2px;top:319.32px;font-size:10.0px;transform:scaleX(0.9500);transform-origin:0 50%;line-height:12.35px;color:#7d7d7d;">1 V</div>
<div class="t" style="left:1626.9px;top:348.12px;font-size:10.0px;transform:scaleX(0.9500);transform-origin:0 50%;line-height:12.35px;color:#000;">1P0VDAC</div>
<div class="t" style="left:1626.9px;top:359.72px;font-size:10.0px;transform:scaleX(0.9500);transform-origin:0 50%;line-height:12.35px;color:#000;">DIG</div>
<div style="left:1670.0px;top:352.0px;width:58.0px;height:20.0px;background:#fff;border:1px solid #000;box-sizing:border-box"></div>
<div class="t" style="left:1674.2px;top:356.22px;font-size:10.0px;transform:scaleX(0.9500);transform-origin:0 50%;line-height:12.35px;color:#7d7d7d;">0 A</div>
<div class="t" style="left:1632.8px;top:391.22px;font-size:10.0px;transform:scaleX(0.9500);transform-origin:0 50%;line-height:12.35px;color:#000;">Power</div>
<div style="left:1670.0px;top:389.0px;width:58.0px;height:19.0px;background:#fff;border:1px solid #000;box-sizing:border-box"></div>
<div class="t" style="left:1674.2px;top:392.37px;font-size:10.0px;transform:scaleX(0.9500);transform-origin:0 50%;line-height:12.35px;color:#7d7d7d;">0 W</div>
<div style="left:1736.0px;top:304.0px;width:104.0px;height:113.0px;border:1px solid #3c3c3c;box-shadow:inset 1px 1px 0 #f4f4f4, 1px 1px 0 #8a8a8a;box-sizing:border-box"></div>
<div class="t" style="left:1740.5px;top:315.12px;font-size:10.0px;transform:scaleX(0.9500);transform-origin:0 50%;line-height:12.35px;color:#000;">VDDD_</div>
<div class="t" style="left:1740.5px;top:326.82px;font-size:10.0px;transform:scaleX(0.9500);transform-origin:0 50%;line-height:12.35px;color:#000;">1P8</div>
<div style="left:1787.0px;top:315.0px;width:49.0px;height:20.0px;background:#fff;border:1px solid #000;box-sizing:border-box"></div>
<div class="t" style="left:1791.3px;top:319.32px;font-size:10.0px;transform:scaleX(0.9500);transform-origin:0 50%;line-height:12.35px;color:#7d7d7d;">0 V</div>
<div class="t" style="left:1742.7px;top:355.82px;font-size:10.0px;transform:scaleX(0.9500);transform-origin:0 50%;line-height:12.35px;color:#000;">1P8VD</div>
<div style="left:1777.0px;top:352.0px;width:59.0px;height:20.0px;background:#fff;border:1px solid #000;box-sizing:border-box"></div>
<div class="t" style="left:1781.4px;top:356.22px;font-size:10.0px;transform:scaleX(0.9500);transform-origin:0 50%;line-height:12.35px;color:#7d7d7d;">0 A</div>
<div class="t" style="left:1740.5px;top:392.02px;font-size:10.0px;transform:scaleX(0.9500);transform-origin:0 50%;line-height:12.35px;color:#000;">Power</div>
<div style="left:1777.0px;top:389.0px;width:59.0px;height:19.0px;background:#fff;border:1px solid #000;box-sizing:border-box"></div>
<div class="t" style="left:1781.4px;top:392.37px;font-size:10.0px;transform:scaleX(0.9500);transform-origin:0 50%;line-height:12.35px;color:#7d7d7d;">0 W</div>
<div style="left:1157.0px;top:427.0px;width:122.0px;height:113.0px;border:1px solid #3c3c3c;box-shadow:inset 1px 1px 0 #f4f4f4, 1px 1px 0 #8a8a8a;box-sizing:border-box"></div>
<div class="t" style="left:1172.9px;top:435.82px;font-size:10.0px;transform:scaleX(0.9500);transform-origin:0 50%;line-height:12.35px;color:#000;">VDDD_1P</div>
<div class="t" style="left:1172.9px;top:447.72px;font-size:10.0px;transform:scaleX(0.9500);transform-origin:0 50%;line-height:12.35px;color:#000;">8_MCS</div>
<div style="left:1225.0px;top:436.0px;width:50.0px;height:20.0px;background:#fff;border:1px solid #000;box-sizing:border-box"></div>
<div class="t" style="left:1229.2px;top:440.17px;font-size:10.0px;transform:scaleX(0.9500);transform-origin:0 50%;line-height:12.35px;color:#7d7d7d;">1.8 V</div>
<div class="t" style="left:1172.4px;top:473.12px;font-size:10.0px;transform:scaleX(0.9500);transform-origin:0 50%;line-height:12.35px;color:#000;">I_VDDD_1</div>
<div class="t" style="left:1172.4px;top:484.72px;font-size:10.0px;transform:scaleX(0.9500);transform-origin:0 50%;line-height:12.35px;color:#000;">P8_MCS</div>
<div style="left:1216.0px;top:473.0px;width:59.0px;height:20.0px;background:#fff;border:1px solid #000;box-sizing:border-box"></div>
<div class="t" style="left:1220.0px;top:477.27px;font-size:10.0px;transform:scaleX(0.9500);transform-origin:0 50%;line-height:12.35px;color:#7d7d7d;">0 A</div>
<div class="t" style="left:1171.6px;top:512.93px;font-size:10.0px;transform:scaleX(0.9500);transform-origin:0 50%;line-height:12.35px;color:#000;">Power</div>
<div style="left:1216.0px;top:509.0px;width:59.0px;height:20.0px;background:#fff;border:1px solid #000;box-sizing:border-box"></div>
<div class="t" style="left:1220.0px;top:513.23px;font-size:10.0px;transform:scaleX(0.9500);transform-origin:0 50%;line-height:12.35px;color:#7d7d7d;">0 W</div>
<div style="left:1280.0px;top:427.0px;width:114.0px;height:113.0px;border:1px solid #3c3c3c;box-shadow:inset 1px 1px 0 #f4f4f4, 1px 1px 0 #8a8a8a;box-sizing:border-box"></div>
<div class="t" style="left:1286.9px;top:434.92px;font-size:10.0px;transform:scaleX(0.9500);transform-origin:0 50%;line-height:12.35px;color:#000;">VDDA</div>
<div class="t" style="left:1286.9px;top:447.02px;font-size:10.0px;transform:scaleX(0.9500);transform-origin:0 50%;line-height:12.35px;color:#000;">_1P8</div>
<div style="left:1334.0px;top:435.0px;width:50.0px;height:19.0px;background:#fff;border:1px solid #000;box-sizing:border-box"></div>
<div class="t" style="left:1337.9px;top:439.07px;font-size:10.0px;transform:scaleX(0.9500);transform-origin:0 50%;line-height:12.35px;color:#7d7d7d;">0 V</div>
<div class="t" style="left:1288.6px;top:471.92px;font-size:10.0px;transform:scaleX(0.9500);transform-origin:0 50%;line-height:12.35px;color:#000;">I_VDDA</div>
<div class="t" style="left:1288.6px;top:483.92px;font-size:10.0px;transform:scaleX(0.9500);transform-origin:0 50%;line-height:12.35px;color:#000;">_1P8</div>
<div style="left:1325.0px;top:472.0px;width:59.0px;height:20.0px;background:#fff;border:1px solid #000;box-sizing:border-box"></div>
<div class="t" style="left:1329.0px;top:476.22px;font-size:10.0px;transform:scaleX(0.9500);transform-origin:0 50%;line-height:12.35px;color:#7d7d7d;">0 A</div>
<div class="t" style="left:1287.4px;top:508.82px;font-size:10.0px;transform:scaleX(0.9500);transform-origin:0 50%;line-height:12.35px;color:#000;">Power</div>
<div style="left:1325.0px;top:508.0px;width:59.0px;height:20.0px;background:#fff;border:1px solid #000;box-sizing:border-box"></div>
<div class="t" style="left:1329.0px;top:512.33px;font-size:10.0px;transform:scaleX(0.9500);transform-origin:0 50%;line-height:12.35px;color:#7d7d7d;">0 W</div>
<div style="left:1397.0px;top:429.0px;width:113.0px;height:113.0px;border:1px solid #3c3c3c;box-shadow:inset 1px 1px 0 #f4f4f4, 1px 1px 0 #8a8a8a;box-sizing:border-box"></div>
<div class="t" style="left:1401.4px;top:436.72px;font-size:10.0px;transform:scaleX(0.9500);transform-origin:0 50%;line-height:12.35px;color:#000;">VDDA_1P</div>
<div class="t" style="left:1401.4px;top:448.82px;font-size:10.0px;transform:scaleX(0.9500);transform-origin:0 50%;line-height:12.35px;color:#000;">8_DAC</div>
<div style="left:1452.0px;top:437.0px;width:51.0px;height:20.0px;background:#fff;border:1px solid #000;box-sizing:border-box"></div>
<div class="t" style="left:1456.2px;top:441.07px;font-size:10.0px;transform:scaleX(0.9500);transform-origin:0 50%;line-height:12.35px;color:#7d7d7d;">0 V</div>
<div class="t" style="left:1401.4px;top:474.72px;font-size:10.0px;transform:scaleX(0.9500);transform-origin:0 50%;line-height:12.35px;color:#000;">I_VDDA_1</div>
<div class="t" style="left:1401.4px;top:486.52px;font-size:10.0px;transform:scaleX(0.9500);transform-origin:0 50%;line-height:12.35px;color:#000;">P8_DAC</div>
<div style="left:1443.0px;top:473.0px;width:60.0px;height:20.0px;background:#fff;border:1px solid #000;box-sizing:border-box"></div>
<div class="t" style="left:1447.2px;top:477.12px;font-size:10.0px;transform:scaleX(0.9500);transform-origin:0 50%;line-height:12.35px;color:#7d7d7d;">0 A</div>
<div class="t" style="left:1404.3px;top:512.93px;font-size:10.0px;transform:scaleX(0.9500);transform-origin:0 50%;line-height:12.35px;color:#000;">Power</div>
<div style="left:1443.0px;top:510.0px;width:60.0px;height:20.0px;background:#fff;border:1px solid #000;box-sizing:border-box"></div>
<div class="t" style="left:1447.2px;top:514.13px;font-size:10.0px;transform:scaleX(0.9500);transform-origin:0 50%;line-height:12.35px;color:#7d7d7d;">0 W</div>
<div style="left:1511.0px;top:429.0px;width:113.0px;height:113.0px;border:1px solid #3c3c3c;box-shadow:inset 1px 1px 0 #f4f4f4, 1px 1px 0 #8a8a8a;box-sizing:border-box"></div>
<div class="t" style="left:1515.7px;top:437.12px;font-size:10.0px;transform:scaleX(0.9500);transform-origin:0 50%;line-height:12.35px;color:#000;">VNEGM1</div>
<div class="t" style="left:1515.7px;top:448.82px;font-size:10.0px;transform:scaleX(0.9500);transform-origin:0 50%;line-height:12.35px;color:#000;">P0_DAC</div>
<div style="left:1565.0px;top:437.0px;width:50.0px;height:20.0px;background:#fff;border:1px solid #000;box-sizing:border-box"></div>
<div class="t" style="left:1569.1px;top:441.07px;font-size:10.0px;transform:scaleX(0.9500);transform-origin:0 50%;line-height:12.35px;color:#7d7d7d;">0 V</div>
<div class="t" style="left:1517.4px;top:469.62px;font-size:10.0px;transform:scaleX(0.9500);transform-origin:0 50%;line-height:12.35px;color:#000;">VNEGM1</div>
<div class="t" style="left:1517.4px;top:481.72px;font-size:10.0px;transform:scaleX(0.9500);transform-origin:0 50%;line-height:12.35px;color:#000;">P0_DAC</div>
<div style="left:1558.0px;top:473.0px;width:59.0px;height:20.0px;background:#fff;border:1px solid #000;box-sizing:border-box"></div>
<div class="t" style="left:1562.0px;top:477.12px;font-size:10.0px;transform:scaleX(0.9500);transform-origin:0 50%;line-height:12.35px;color:#7d7d7d;">0 A</div>
<div class="t" style="left:1521.8px;top:512.93px;font-size:10.0px;transform:scaleX(0.9500);transform-origin:0 50%;line-height:12.35px;color:#000;">Power</div>
<div style="left:1558.0px;top:510.0px;width:59.0px;height:20.0px;background:#fff;border:1px solid #000;box-sizing:border-box"></div>
<div class="t" style="left:1562.0px;top:514.13px;font-size:10.0px;transform:scaleX(0.9500);transform-origin:0 50%;line-height:12.35px;color:#7d7d7d;">0 W</div>
<div style="left:1626.0px;top:429.0px;width:113.0px;height:113.0px;border:1px solid #3c3c3c;box-shadow:inset 1px 1px 0 #f4f4f4, 1px 1px 0 #8a8a8a;box-sizing:border-box"></div>
<div class="t" style="left:1628.4px;top:437.12px;font-size:10.0px;transform:scaleX(0.9500);transform-origin:0 50%;line-height:12.35px;color:#000;">VNEGM1</div>
<div class="t" style="left:1628.4px;top:448.82px;font-size:10.0px;transform:scaleX(0.9500);transform-origin:0 50%;line-height:12.35px;color:#000;">P0_ADC</div>
<div style="left:1679.0px;top:437.0px;width:50.0px;height:20.0px;background:#fff;border:1px solid #000;box-sizing:border-box"></div>
<div class="t" style="left:1683.2px;top:441.07px;font-size:10.0px;transform:scaleX(0.9500);transform-origin:0 50%;line-height:12.35px;color:#7d7d7d;">0 V</div>
<div class="t" style="left:1628.4px;top:472.92px;font-size:10.0px;transform:scaleX(0.9500);transform-origin:0 50%;line-height:12.35px;color:#000;">VNEGM1</div>
<div class="t" style="left:1628.4px;top:485.02px;font-size:10.0px;transform:scaleX(0.9500);transform-origin:0 50%;line-height:12.35px;color:#000;">P0_ADC</div>
<div style="left:1670.0px;top:473.0px;width:59.0px;height:20.0px;background:#fff;border:1px solid #000;box-sizing:border-box"></div>
<div class="t" style="left:1674.2px;top:477.12px;font-size:10.0px;transform:scaleX(0.9500);transform-origin:0 50%;line-height:12.35px;color:#7d7d7d;">0 A</div>
<div class="t" style="left:1633.9px;top:512.93px;font-size:10.0px;transform:scaleX(0.9500);transform-origin:0 50%;line-height:12.35px;color:#000;">Power</div>
<div style="left:1670.0px;top:510.0px;width:59.0px;height:20.0px;background:#fff;border:1px solid #000;box-sizing:border-box"></div>
<div class="t" style="left:1674.2px;top:514.13px;font-size:10.0px;transform:scaleX(0.9500);transform-origin:0 50%;line-height:12.35px;color:#7d7d7d;">0 W</div>
<div style="left:1152.0px;top:560.0px;width:560.0px;height:176.0px;border:1px solid #222;box-shadow:inset 1px 1px 0 #f4f4f4;box-sizing:border-box"></div>
<div class="t" style="left:1473.4px;top:568.60px;font-size:20.5px;line-height:24.60px;color:#000;font-weight:bold">Digital</div>
<div style="left:1161.0px;top:568.0px;width:269.0px;height:32.0px;border:1px solid #3c3c3c;box-shadow:inset 1px 1px 0 #f4f4f4, 1px 1px 0 #8a8a8a;box-sizing:border-box"></div>
<div class="t" style="left:1171.6px;top:574.62px;font-size:10.0px;transform:scaleX(0.9500);transform-origin:0 50%;line-height:12.35px;color:#000;">LTM4681</div>
<div class="t" style="left:1171.6px;top:586.93px;font-size:10.0px;transform:scaleX(0.9500);transform-origin:0 50%;line-height:12.35px;color:#000;">Vin01</div>
<div style="left:1226.0px;top:575.0px;width:58.0px;height:20.0px;background:#fff;border:1px solid #000;box-sizing:border-box"></div>
<div class="t" style="left:1230.1px;top:579.08px;font-size:10.0px;transform:scaleX(0.9500);transform-origin:0 50%;line-height:12.35px;color:#7d7d7d;">0 V</div>
<div class="t" style="left:1296.3px;top:573.83px;font-size:10.0px;transform:scaleX(0.9500);transform-origin:0 50%;line-height:12.35px;color:#000;">LTM4681</div>
<div class="t" style="left:1296.3px;top:585.73px;font-size:10.0px;transform:scaleX(0.9500);transform-origin:0 50%;line-height:12.35px;color:#000;">Vin23</div>
<div style="left:1352.0px;top:574.0px;width:59.0px;height:19.0px;background:#fff;border:1px solid #000;box-sizing:border-box"></div>
<div class="t" style="left:1356.0px;top:578.02px;font-size:10.0px;transform:scaleX(0.9500);transform-origin:0 50%;line-height:12.35px;color:#7d7d7d;">0 V</div>
<div style="left:1161.0px;top:606.0px;width:132.0px;height:113.0px;border:1px solid #3c3c3c;box-shadow:inset 1px 1px 0 #f4f4f4, 1px 1px 0 #8a8a8a;box-sizing:border-box"></div>
<div class="t" style="left:1167.5px;top:615.33px;font-size:10.0px;transform:scaleX(0.9500);transform-origin:0 50%;line-height:12.35px;color:#000;">VDDD_0P8</div>
<div class="t" style="left:1167.5px;top:627.73px;font-size:10.0px;transform:scaleX(0.9500);transform-origin:0 50%;line-height:12.35px;color:#000;">(Chan A)</div>
<div style="left:1226.0px;top:616.0px;width:58.0px;height:20.0px;background:#fff;border:1px solid #000;box-sizing:border-box"></div>
<div class="t" style="left:1230.1px;top:620.23px;font-size:10.0px;transform:scaleX(0.9500);transform-origin:0 50%;line-height:12.35px;color:#7d7d7d;">0 V</div>
<div class="t" style="left:1168.2px;top:652.83px;font-size:10.0px;transform:scaleX(0.9500);transform-origin:0 50%;line-height:12.35px;color:#000;">I_VDDD_0P8</div>
<div class="t" style="left:1168.2px;top:664.73px;font-size:10.0px;transform:scaleX(0.9500);transform-origin:0 50%;line-height:12.35px;color:#000;">(Chan A)</div>
<div style="left:1226.0px;top:653.0px;width:58.0px;height:20.0px;background:#fff;border:1px solid #000;box-sizing:border-box"></div>
<div class="t" style="left:1230.1px;top:657.13px;font-size:10.0px;transform:scaleX(0.9500);transform-origin:0 50%;line-height:12.35px;color:#7d7d7d;">0 A</div>
<div class="t" style="left:1172.3px;top:688.93px;font-size:10.0px;transform:scaleX(0.9500);transform-origin:0 50%;line-height:12.35px;color:#000;">Power</div>
<div class="t" style="left:1172.3px;top:700.73px;font-size:10.0px;transform:scaleX(0.9500);transform-origin:0 50%;line-height:12.35px;color:#000;">(Chan A)</div>
<div style="left:1226.0px;top:689.0px;width:58.0px;height:19.0px;background:#fff;border:1px solid #000;box-sizing:border-box"></div>
<div class="t" style="left:1230.1px;top:693.02px;font-size:10.0px;transform:scaleX(0.9500);transform-origin:0 50%;line-height:12.35px;color:#7d7d7d;">0 W</div>
<div style="left:1298.0px;top:606.0px;width:132.0px;height:113.0px;border:1px solid #3c3c3c;box-shadow:inset 1px 1px 0 #f4f4f4, 1px 1px 0 #8a8a8a;box-sizing:border-box"></div>
<div class="t" style="left:1302.7px;top:614.62px;font-size:10.0px;transform:scaleX(0.9500);transform-origin:0 50%;line-height:12.35px;color:#000;">VDDD_0P8</div>
<div class="t" style="left:1302.7px;top:626.73px;font-size:10.0px;transform:scaleX(0.9500);transform-origin:0 50%;line-height:12.35px;color:#000;">(Chan B)</div>
<div style="left:1362.0px;top:615.0px;width:60.0px;height:20.0px;background:#fff;border:1px solid #000;box-sizing:border-box"></div>
<div class="t" style="left:1366.0px;top:619.18px;font-size:10.0px;transform:scaleX(0.9500);transform-origin:0 50%;line-height:12.35px;color:#7d7d7d;">0 V</div>
<div class="t" style="left:1303.4px;top:652.12px;font-size:10.0px;transform:scaleX(0.9500);transform-origin:0 50%;line-height:12.35px;color:#000;">I_VDDD_0P8</div>
<div class="t" style="left:1303.4px;top:664.02px;font-size:10.0px;transform:scaleX(0.9500);transform-origin:0 50%;line-height:12.35px;color:#000;">(Chan B)</div>
<div style="left:1362.0px;top:652.0px;width:60.0px;height:20.0px;background:#fff;border:1px solid #000;box-sizing:border-box"></div>
<div class="t" style="left:1366.0px;top:656.02px;font-size:10.0px;transform:scaleX(0.9500);transform-origin:0 50%;line-height:12.35px;color:#7d7d7d;">0 A</div>
<div class="t" style="left:1308.1px;top:687.73px;font-size:10.0px;transform:scaleX(0.9500);transform-origin:0 50%;line-height:12.35px;color:#000;">Power</div>
<div class="t" style="left:1308.1px;top:699.52px;font-size:10.0px;transform:scaleX(0.9500);transform-origin:0 50%;line-height:12.35px;color:#000;">(Chan B)</div>
<div style="left:1362.0px;top:688.0px;width:60.0px;height:20.0px;background:#fff;border:1px solid #000;box-sizing:border-box"></div>
<div class="t" style="left:1366.0px;top:691.98px;font-size:10.0px;transform:scaleX(0.9500);transform-origin:0 50%;line-height:12.35px;color:#7d7d7d;">0 W</div>
<div style="left:1434.0px;top:606.0px;width:132.0px;height:113.0px;border:1px solid #3c3c3c;box-shadow:inset 1px 1px 0 #f4f4f4, 1px 1px 0 #8a8a8a;box-sizing:border-box"></div>
<div class="t" style="left:1437.3px;top:614.93px;font-size:10.0px;transform:scaleX(0.9500);transform-origin:0 50%;line-height:12.35px;color:#000;">VDDD_0P8_</div>
<div class="t" style="left:1437.3px;top:626.73px;font-size:10.0px;transform:scaleX(0.9500);transform-origin:0 50%;line-height:12.35px;color:#000;">ADC</div>
<div style="left:1495.0px;top:616.0px;width:59.0px;height:20.0px;background:#fff;border:1px solid #000;box-sizing:border-box"></div>
<div class="t" style="left:1499.2px;top:620.23px;font-size:10.0px;transform:scaleX(0.9500);transform-origin:0 50%;line-height:12.35px;color:#7d7d7d;">0 V</div>
<div class="t" style="left:1437.3px;top:652.12px;font-size:10.0px;transform:scaleX(0.9500);transform-origin:0 50%;line-height:12.35px;color:#000;">I_VDDD0P8</div>
<div class="t" style="left:1437.3px;top:664.02px;font-size:10.0px;transform:scaleX(0.9500);transform-origin:0 50%;line-height:12.35px;color:#000;">_ADC</div>
<div style="left:1495.0px;top:653.0px;width:59.0px;height:20.0px;background:#fff;border:1px solid #000;box-sizing:border-box"></div>
<div class="t" style="left:1499.2px;top:657.13px;font-size:10.0px;transform:scaleX(0.9500);transform-origin:0 50%;line-height:12.35px;color:#7d7d7d;">0 A</div>
<div class="t" style="left:1440.2px;top:692.02px;font-size:10.0px;transform:scaleX(0.9500);transform-origin:0 50%;line-height:12.35px;color:#000;">Power</div>
<div style="left:1495.0px;top:689.0px;width:59.0px;height:19.0px;background:#fff;border:1px solid #000;box-sizing:border-box"></div>
<div class="t" style="left:1499.2px;top:693.02px;font-size:10.0px;transform:scaleX(0.9500);transform-origin:0 50%;line-height:12.35px;color:#7d7d7d;">0 W</div>
<div style="left:1571.0px;top:606.0px;width:132.0px;height:113.0px;border:1px solid #3c3c3c;box-shadow:inset 1px 1px 0 #f4f4f4, 1px 1px 0 #8a8a8a;box-sizing:border-box"></div>
<div class="t" style="left:1576.6px;top:608.73px;font-size:10.0px;transform:scaleX(0.9500);transform-origin:0 50%;line-height:12.35px;color:#000;">VDDD_1P0</div>
<div class="t" style="left:1576.6px;top:620.83px;font-size:10.0px;transform:scaleX(0.9500);transform-origin:0 50%;line-height:12.35px;color:#000;">(+VDDD_1P</div>
<div class="t" style="left:1576.6px;top:632.73px;font-size:10.0px;transform:scaleX(0.9500);transform-origin:0 50%;line-height:12.35px;color:#000;">0_SERDES)</div>
<div style="left:1635.0px;top:616.0px;width:59.0px;height:20.0px;background:#fff;border:1px solid #000;box-sizing:border-box"></div>
<div class="t" style="left:1639.2px;top:620.23px;font-size:10.0px;transform:scaleX(0.9500);transform-origin:0 50%;line-height:12.35px;color:#7d7d7d;">0 V</div>
<div class="t" style="left:1576.6px;top:650.23px;font-size:10.0px;transform:scaleX(0.9500);transform-origin:0 50%;line-height:12.35px;color:#000;">I_VDDD</div>
<div class="t" style="left:1576.6px;top:662.12px;font-size:10.0px;transform:scaleX(0.9500);transform-origin:0 50%;line-height:12.35px;color:#000;">_1P0</div>
<div style="left:1635.0px;top:653.0px;width:59.0px;height:20.0px;background:#fff;border:1px solid #000;box-sizing:border-box"></div>
<div class="t" style="left:1639.2px;top:657.13px;font-size:10.0px;transform:scaleX(0.9500);transform-origin:0 50%;line-height:12.35px;color:#7d7d7d;">0 A</div>
<div class="t" style="left:1574.7px;top:692.02px;font-size:10.0px;transform:scaleX(0.9500);transform-origin:0 50%;line-height:12.35px;color:#000;">Power</div>
<div style="left:1635.0px;top:689.0px;width:59.0px;height:19.0px;background:#fff;border:1px solid #000;box-sizing:border-box"></div>
<div class="t" style="left:1639.2px;top:693.02px;font-size:10.0px;transform:scaleX(0.9500);transform-origin:0 50%;line-height:12.35px;color:#7d7d7d;">0 W</div>
<div style="left:1726.0px;top:560.0px;width:122.0px;height:176.0px;border:1px solid #222;box-shadow:inset 1px 1px 0 #f4f4f4;box-sizing:border-box"></div>
<div class="t" style="left:1755.2px;top:578.60px;font-size:20.5px;line-height:24.60px;color:#000;font-weight:bold">Total</div>
<div class="t" style="left:1755.2px;top:603.00px;font-size:20.5px;line-height:24.60px;color:#000;font-weight:bold">Power</div>
<div style="left:1753.0px;top:647.0px;width:59.0px;height:19.0px;background:#fff;border:1px solid #000;box-sizing:border-box"></div>
<div class="t" style="left:1756.8px;top:651.12px;font-size:10.0px;transform:scaleX(0.9500);transform-origin:0 50%;line-height:12.35px;color:#7d7d7d;">0 W</div>
<div style="left:1425.0px;top:750.0px;width:159.0px;height:31.0px;background:#e5e5e5;border:1px solid #adadad;box-sizing:border-box"></div>
<div class="t" style="left:1425.2px;width:158.5px;text-align:center;top:759.83px;font-size:10.0px;transform:scaleX(0.9500);transform-origin:50% 50%;line-height:12.35px;color:#000">Power Readback</div>
<div class="t" style="left:1891.0px;top:592.69px;font-size:20.4px;line-height:24.48px;color:#000;font-weight:bold">NCO Test Mode</div>
<div class="t" style="left:1884.0px;top:643.93px;font-size:10.0px;transform:scaleX(0.9500);transform-origin:0 50%;line-height:12.35px;color:#000;">Tx NCO Power</div>
<div class="t" style="left:1977.2px;top:643.93px;font-size:10.0px;transform:scaleX(0.9500);transform-origin:0 50%;line-height:12.35px;color:#000;">Rx NCO Power</div>
<div style="left:1880.0px;top:665.0px;width:76.0px;height:21.0px;background:#e5e5e5;border:1px solid #acacac;box-sizing:border-box"></div>
<div class="t" style="left:1885.0px;top:669.77px;font-size:10.0px;transform:scaleX(0.9500);transform-origin:0 50%;line-height:12.35px;color:#000;">Full Scale</div>
<div style="left:1974.0px;top:665.0px;width:76.0px;height:21.0px;background:#e5e5e5;border:1px solid #acacac;box-sizing:border-box"></div>
<div class="t" style="left:1978.9px;top:669.77px;font-size:10.0px;transform:scaleX(0.9500);transform-origin:0 50%;line-height:12.35px;color:#000;">Full Scale</div>
<div class="t" style="left:1880.7px;top:699.93px;font-size:10.0px;transform:scaleX(0.9500);transform-origin:0 50%;line-height:12.35px;color:#000;">Tx CNCO Test</div>
<div class="t" style="left:1880.7px;top:712.02px;font-size:10.0px;transform:scaleX(0.9500);transform-origin:0 50%;line-height:12.35px;color:#000;">Mode Enable</div>
<div class="t" style="left:1973.5px;top:699.93px;font-size:10.0px;transform:scaleX(0.9500);transform-origin:0 50%;line-height:12.35px;color:#000;">Rx CNCO Test</div>
<div class="t" style="left:1973.5px;top:712.02px;font-size:10.0px;transform:scaleX(0.9500);transform-origin:0 50%;line-height:12.35px;color:#000;">Mode Enable</div>
<div class="t" style="left:1883.6px;top:736.02px;font-size:10.0px;transform:scaleX(0.9500);transform-origin:0 50%;line-height:12.35px;color:#000;">Tx FNCO Test</div>
<div class="t" style="left:1883.6px;top:748.02px;font-size:10.0px;transform:scaleX(0.9500);transform-origin:0 50%;line-height:12.35px;color:#000;">Mode Enable</div>
<div class="t" style="left:1976.3px;top:736.02px;font-size:10.0px;transform:scaleX(0.9500);transform-origin:0 50%;line-height:12.35px;color:#000;">Rx FNCO Test</div>
<div class="t" style="left:1976.3px;top:748.02px;font-size:10.0px;transform:scaleX(0.9500);transform-origin:0 50%;line-height:12.35px;color:#000;">Mode Enable</div>
<div style="left:1943.0px;top:705.0px;width:16.0px;height:16.0px;background:#e8e8e8;border:1px solid #b4b4b4;box-sizing:border-box"></div>
<div style="left:2036.0px;top:705.0px;width:16.0px;height:16.0px;background:#e8e8e8;border:1px solid #b4b4b4;box-sizing:border-box"></div>
<div style="left:1944.0px;top:740.0px;width:16.0px;height:16.0px;background:#e8e8e8;border:1px solid #b4b4b4;box-sizing:border-box"></div>
<div style="left:2038.0px;top:740.0px;width:16.0px;height:16.0px;background:#e8e8e8;border:1px solid #b4b4b4;box-sizing:border-box"></div>
<svg width="2139" height="1054" viewBox="0 0 2139 1054">
<path d="M48.4 13.4 L57.6 22.4 M57.6 13.4 L48.4 22.4" stroke="#474747" stroke-width="2.5" fill="none" />
<path d="M173.7 13.4 L182.9 22.4 M182.9 13.4 L173.7 22.4" stroke="#474747" stroke-width="2.5" fill="none" />
<path d="M251.4 13.4 L260.6 22.4 M260.6 13.4 L251.4 22.4" stroke="#474747" stroke-width="2.5" fill="none" />
<path d="M334.7 13.4 L343.9 22.4 M343.9 13.4 L334.7 22.4" stroke="#474747" stroke-width="2.5" fill="none" />
<path d="M2063.90 50.80 L2063.90 43.90 L2071.00 43.90" stroke="#0e7da2" stroke-width="1.8" fill="none" />
<path d="M2066.30 46.10 L2071.30 46.10 L2066.30 51.10 Z" stroke="none" stroke-width="1" fill="#0e7da2" stroke="#0e7da2" stroke-width="0.6"/>
<path d="M2068.00 47.80 L2073.60 53.40" stroke="#0e7da2" stroke-width="2.8" fill="none" />
<path d="M2063.90 63.20 L2063.90 70.10 L2071.00 70.10" stroke="#0e7da2" stroke-width="1.8" fill="none" />
<path d="M2066.30 67.90 L2071.30 67.90 L2066.30 62.90 Z" stroke="none" stroke-width="1" fill="#0e7da2" stroke="#0e7da2" stroke-width="0.6"/>
<path d="M2068.00 66.20 L2073.60 60.60" stroke="#0e7da2" stroke-width="2.8" fill="none" />
<path d="M2090.10 50.80 L2090.10 43.90 L2083.00 43.90" stroke="#0e7da2" stroke-width="1.8" fill="none" />
<path d="M2087.70 46.10 L2082.70 46.10 L2087.70 51.10 Z" stroke="none" stroke-width="1" fill="#0e7da2" stroke="#0e7da2" stroke-width="0.6"/>
<path d="M2086.00 47.80 L2080.40 53.40" stroke="#0e7da2" stroke-width="2.8" fill="none" />
<path d="M2090.10 63.20 L2090.10 70.10 L2083.00 70.10" stroke="#0e7da2" stroke-width="1.8" fill="none" />
<path d="M2087.70 67.90 L2082.70 67.90 L2087.70 62.90 Z" stroke="none" stroke-width="1" fill="#0e7da2" stroke="#0e7da2" stroke-width="0.6"/>
<path d="M2086.00 66.20 L2080.40 60.60" stroke="#0e7da2" stroke-width="2.8" fill="none" />
<path d="M2105.6 68.2 L2115.5 58.3" stroke="#0e7da2" stroke-width="4.2" fill="none" stroke-linecap="round"/>
<circle cx="2120.7" cy="52.5" r="8.3" stroke="#0e7da2" stroke-width="2.2" fill="#fff"/>
<path d="M2116.9 52.5 L2124.5 52.5 M2120.7 48.7 L2120.7 56.3" stroke="#0e7da2" stroke-width="1.5" fill="none" />
<path d="M337.5 48.8 L328.8 56 L337.5 63.2" stroke="#fff" stroke-width="2.6" fill="none" />
<path d="M311.4 127.6 L317.2 121.3 L322.9 127.6" stroke="#fff" stroke-width="2.3" fill="none" stroke-linecap="butt" stroke-linejoin="miter"/>
<path d="M311.4 194.8 L317.2 188.5 L322.9 194.8" stroke="#fff" stroke-width="2.3" fill="none" stroke-linecap="butt" stroke-linejoin="miter"/>
<path d="M311.4 255.5 L317.2 261.8 L322.9 255.5" stroke="#fff" stroke-width="2.3" fill="none" stroke-linecap="butt" stroke-linejoin="miter"/>
<path d="M311.4 298.8 L317.2 292.6 L322.9 298.8" stroke="#fff" stroke-width="2.3" fill="none" stroke-linecap="butt" stroke-linejoin="miter"/>
<path d="M311.4 408.6 L317.2 402.3 L322.9 408.6" stroke="#fff" stroke-width="2.3" fill="none" stroke-linecap="butt" stroke-linejoin="miter"/>
<path d="M311.4 517.8 L317.2 511.5 L322.9 517.8" stroke="#fff" stroke-width="2.3" fill="none" stroke-linecap="butt" stroke-linejoin="miter"/>
<path d="M311.4 626.8 L317.2 620.5 L322.9 626.8" stroke="#fff" stroke-width="2.3" fill="none" stroke-linecap="butt" stroke-linejoin="miter"/>
<path d="M311.4 761.6 L317.2 755.3 L322.9 761.6" stroke="#fff" stroke-width="2.3" fill="none" stroke-linecap="butt" stroke-linejoin="miter"/>
<path d="M311.4 864.3 L317.2 870.6 L322.9 864.3" stroke="#fff" stroke-width="2.3" fill="none" stroke-linecap="butt" stroke-linejoin="miter"/>
<path d="M311.4 907.4 L317.2 901.1 L322.9 907.4" stroke="#fff" stroke-width="2.3" fill="none" stroke-linecap="butt" stroke-linejoin="miter"/>
<path d="M311.4 965.6 L317.2 959.3 L322.9 965.6" stroke="#fff" stroke-width="2.3" fill="none" stroke-linecap="butt" stroke-linejoin="miter"/>
<path d="M305.2 154.6 L310.0 159.9 L314.8 154.6" stroke="#404040" stroke-width="1.7" fill="none" stroke-linecap="butt" stroke-linejoin="miter"/>
<path d="M305.2 221.4 L310.0 226.8 L314.8 221.4" stroke="#404040" stroke-width="1.7" fill="none" stroke-linecap="butt" stroke-linejoin="miter"/>
<path d="M305.2 325.6 L310.0 330.8 L314.8 325.6" stroke="#404040" stroke-width="1.7" fill="none" stroke-linecap="butt" stroke-linejoin="miter"/>
<path d="M305.2 721.5 L310.0 726.8 L314.8 721.5" stroke="#404040" stroke-width="1.7" fill="none" stroke-linecap="butt" stroke-linejoin="miter"/>
<rect x="351.5" y="997.5" width="164" height="32" fill="none" stroke="#444" stroke-width="1" stroke-dasharray="3 2"/>
<path d="M485.5 1006.5 L494.5 1011.3 L485.5 1016.1 Z" stroke="none" stroke-width="1" fill="#fff" />
<path d="M912.3 295.1 L916.6 299.2 L924.2 290.9" stroke="#fff" stroke-width="2.6" fill="none" />
<path d="M912.3 322.4 L916.6 326.5 L924.2 318.2" stroke="#fff" stroke-width="2.6" fill="none" />
<path d="M912.3 349.7 L916.6 353.8 L924.2 345.5" stroke="#fff" stroke-width="2.6" fill="none" />
<path d="M912.3 377.0 L916.6 381.1 L924.2 372.8" stroke="#fff" stroke-width="2.6" fill="none" />
<path d="M912.3 404.3 L916.6 408.4 L924.2 400.1" stroke="#fff" stroke-width="2.6" fill="none" />
<path d="M912.3 431.6 L916.6 435.7 L924.2 427.4" stroke="#fff" stroke-width="2.6" fill="none" />
<path d="M912.3 458.9 L916.6 463.0 L924.2 454.7" stroke="#fff" stroke-width="2.6" fill="none" />
<path d="M912.3 486.2 L916.6 490.3 L924.2 482.0" stroke="#fff" stroke-width="2.6" fill="none" />
<path d="M1938.6 673.2 L1943.4 678.2 L1948.1 673.2" stroke="#333" stroke-width="1.4" fill="none" stroke-linecap="butt" stroke-linejoin="miter"/>
<path d="M2033.0 673.2 L2037.7 678.2 L2042.5 673.2" stroke="#333" stroke-width="1.4" fill="none" stroke-linecap="butt" stroke-linejoin="miter"/>
</svg>
</body></html>
